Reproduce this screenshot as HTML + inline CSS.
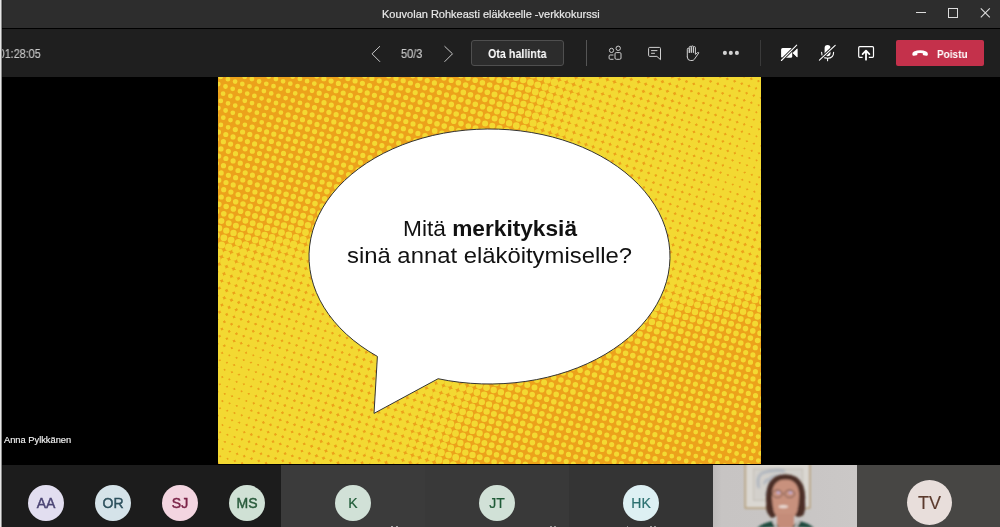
<!DOCTYPE html>
<html><head><meta charset="utf-8">
<style>
*{margin:0;padding:0;box-sizing:border-box}
html,body{width:1000px;height:527px;overflow:hidden;background:#000}
body{position:relative;font-family:"Liberation Sans",sans-serif}
.a{position:absolute}
.t{position:absolute;white-space:nowrap;line-height:1;will-change:transform}
.av span{will-change:transform}
.av{position:absolute;border-radius:50%;text-align:center;font-weight:normal;font-size:14px;-webkit-text-stroke:0.45px currentColor}
.av span{position:absolute;left:0;right:0;white-space:nowrap}
</style></head><body>
<!-- title bar -->
<div class="a" style="left:0;top:0;width:1000px;height:28px;background:#2d2d2d"></div>
<div class="a" style="left:0;top:28px;width:1000px;height:1px;background:#000"></div>
<div class="t" style="left:382px;top:9px;font-size:11px;color:#e8e8e8;-webkit-text-stroke:0.2px currentColor">Kouvolan Rohkeasti eläkkeelle -verkkokurssi</div>
<div class="a" style="left:916px;top:12px;width:10px;height:1px;background:#dcdcdc"></div>
<div class="a" style="left:948px;top:8px;width:10px;height:10px;border:1px solid #dcdcdc"></div>
<svg class="a" style="left:978px;top:6px" width="14" height="14" viewBox="978 6 14 14"><path d="M980.8 8.4L989.8 17.4M989.8 8.4L980.8 17.4" stroke="#dcdcdc" stroke-width="1.1"/></svg>
<!-- toolbar -->
<div class="a" style="left:0;top:29px;width:1000px;height:48px;background:#1f1f1f"></div>
<div class="t" style="right:959px;top:48px;font-size:12px;color:#c8c8c8;-webkit-text-stroke:0.15px currentColor;transform:scaleX(0.9);transform-origin:100% 0">01:28:05</div>
<svg class="a" style="left:0;top:29px" width="1000" height="48" viewBox="0 29 1000 48">
 <g fill="none" stroke="#c8c8c8" stroke-width="1">
  <path d="M380 46.2L372 53.8L380 61.8"/>
  <path d="M444.5 46.2L452.5 53.8L444.5 61.8"/>
 </g>
 <rect x="586" y="40" width="1" height="26" fill="#555"/>
 <rect x="760" y="40" width="1" height="26" fill="#3a3a3a"/>
 <!-- people -->
 <g fill="none" stroke="#cfcfcf" stroke-width="1">
  <circle cx="611.5" cy="50.4" r="2.1"/>
  <circle cx="618.2" cy="48.3" r="2.2"/>
  <path d="M613.5 55H610.2Q609.1 55 609.1 56.1V58.2Q609.1 59.3 610.2 59.3H613.5"/>
  <path d="M616.2 52.6H619.8Q621 52.6 621 53.8V58Q621 59.3 619.7 59.3H616.3Q615 59.3 615 58V53.8Q615 52.6 616.2 52.6Z"/>
 </g>
 <!-- chat -->
 <g fill="none" stroke="#cfcfcf" stroke-width="1">
  <path d="M649.7 47.4H659.4Q660.5 47.4 660.5 48.5V59.7L656.9 56.4H649.7Q648.6 56.4 648.6 55.3V48.5Q648.6 47.4 649.7 47.4Z" stroke-linejoin="round"/>
  <path d="M651.1 50.6H657.4M651.1 53.3H654.9"/>
 </g>
 <!-- hand -->
 <g fill="none" stroke="#cfcfcf" stroke-width="1" stroke-linejoin="round" stroke-linecap="round">
  <path d="M687.3 57V49.2Q687.3 48.2 688.3 48.2Q689.3 48.2 689.3 49.2V52.5M689.3 52.5V47.3Q689.3 46.3 690.3 46.3Q691.3 46.3 691.3 47.3V52.3M691.3 52.3V46.9Q691.3 45.9 692.4 45.9Q693.4 45.9 693.4 46.9V52.3M693.4 52.3V47.6Q693.4 46.6 694.4 46.6Q695.4 46.6 695.4 47.6V54.4L697.5 52.6Q698.3 52 698.9 52.8L694.2 59.5Q693.5 60.5 692 60.5H690.3Q687.3 60.5 687.3 57"/>
 </g>
 <!-- more -->
 <g fill="#d2d2d2"><circle cx="724.9" cy="52.9" r="2.05"/><circle cx="730.8" cy="52.9" r="2.05"/><circle cx="736.9" cy="52.9" r="2.05"/></g>
 <!-- camera off -->
 <rect x="781.1" y="47.9" width="11.1" height="9.9" rx="1.5" fill="#fff"/>
 <path d="M792.9 52.9L797.2 48.9V57Z" fill="#fff" stroke="#fff" stroke-width="0.8" stroke-linejoin="round"/>
 <path d="M781.4 60.5L796.7 45.2" stroke="#1f1f1f" stroke-width="3"/>
 <path d="M781.4 60.5L796.7 45.2" stroke="#fff" stroke-width="1.1" stroke-linecap="round"/>
 <!-- mic off -->
 <rect x="824.6" y="44.9" width="5.9" height="11.4" rx="2.95" fill="#fff"/>
 <path d="M821.6 52.3Q821.6 58.3 827.6 58.3Q833.6 58.3 833.6 52.3M827.6 58.3V60.7" fill="none" stroke="#fff" stroke-width="1.1" stroke-linecap="round"/>
 <path d="M819.4 60.2L835.2 45.4" stroke="#1f1f1f" stroke-width="3"/>
 <path d="M819.4 60.2L835.2 45.4" stroke="#fff" stroke-width="1.1" stroke-linecap="round"/>
 <!-- share -->
 <path d="M862.6 57.3H859.7Q858.7 57.3 858.7 56.3V47.7Q858.7 46.7 859.7 46.7H872.5Q873.5 46.7 873.5 47.7V56.3Q873.5 57.3 872.5 57.3H868.8" fill="none" stroke="#fff" stroke-width="1.2"/>
 <path d="M866 59.7V51M862.6 54.1L866 50.6L869.4 54.1" fill="none" stroke="#fff" stroke-width="1.8" stroke-linejoin="round" stroke-linecap="round"/>
</svg>
<div class="t" style="left:401px;top:48px;font-size:12px;color:#c8c8c8;-webkit-text-stroke:0.15px currentColor;transform:scaleX(0.91);transform-origin:0 0">50/3</div>
<div class="a" style="left:471px;top:40px;width:93px;height:26px;border:1px solid #4f4f4f;border-radius:3px;background:#2c2c2c"></div>
<div class="t" style="left:488px;top:48px;font-size:12px;font-weight:bold;color:#fff;transform:scaleX(0.895);transform-origin:0 0">Ota hallinta</div>
<div class="a" style="left:896px;top:40px;width:88px;height:26px;border-radius:2px;background:#c4314b"></div>
<svg class="a" style="left:910px;top:48px" width="20" height="10" viewBox="910 48 20 10"><path d="M912.3 54.6Q912 52.6 914 51.6Q917 50.2 920.1 50.2Q923.2 50.2 926.2 51.6Q928.2 52.6 927.9 54.6Q927.7 56 926.3 55.8L923.6 55.3Q922.8 55.1 922.8 54.3V53.3Q921.5 52.9 920.1 52.9Q918.7 52.9 917.4 53.3V54.3Q917.4 55.1 916.6 55.3L913.9 55.8Q912.5 56 912.3 54.6Z" fill="#fff"/></svg>
<div class="t" style="left:937px;top:49px;font-size:11px;font-weight:bold;color:#fff;transform:scaleX(0.908);transform-origin:0 0">Poistu</div>

<!-- slide -->
<svg class="a" style="left:218px;top:77px" width="543" height="387" viewBox="0 0 543 387">
 <rect width="543" height="387" fill="#eca21b"/>
 <g stroke-linecap="round" fill="none">
<g stroke="#f3d932">
<path stroke-width="4.8" d="M2.6 -0.1h0M0.3 7.1h0M-2.1 14.3h0M9.9 2.2h0M7.5 9.5h0M5.1 16.7h0M2.8 23.9h0M0.4 31.1h0M-1.9 38.3h0M17.1 4.6h0M14.7 11.8h0M12.4 19.0h0M10.0 26.3h0M7.6 33.5h0M5.3 40.7h0M2.9 47.9h0M26.7 -0.2h0M24.3 7.0h0M21.9 14.2h0M19.6 21.4h0M17.2 28.6h0M14.8 35.8h0M12.5 43.1h0M10.1 50.3h0M33.9 2.1h0M31.5 9.3h0M29.2 16.6h0M26.8 23.8h0M24.4 31.0h0M22.1 38.2h0M19.7 45.4h0M41.1 4.5h0M38.7 11.7h0M36.4 18.9h0M34.0 26.1h0M31.6 33.3h0M29.3 40.6h0M26.9 47.8h0M50.7 -0.4h0M48.3 6.8h0M45.9 14.1h0M43.6 21.3h0M41.2 28.5h0M38.9 35.7h0M36.5 42.9h0M57.9 2.0h0M55.5 9.2h0M53.2 16.4h0M50.8 23.6h0M48.4 30.9h0M46.1 38.1h0M43.7 45.3h0M65.1 4.3h0M62.7 11.6h0M60.4 18.8h0M58.0 26.0h0M55.7 33.2h0M53.3 40.4h0M74.7 -0.5h0M72.3 6.7h0M70.0 13.9h0M67.6 21.1h0M65.2 28.4h0M62.9 35.6h0M81.9 1.9h0M79.5 9.1h0M77.2 16.3h0M74.8 23.5h0M72.5 30.7h0M89.1 4.2h0M86.8 11.4h0M84.4 18.7h0M82.0 25.9h0M98.7 -0.6h0M96.3 6.6h0M94.0 13.8h0M91.6 21.0h0M446.6 376.9h0M444.2 384.1h0M458.5 364.8h0M456.2 372.0h0M453.8 379.2h0M451.4 386.5h0M470.5 352.7h0M468.1 360.0h0M465.7 367.2h0M463.4 374.4h0M461.0 381.6h0M458.7 388.8h0M480.0 347.9h0M477.7 355.1h0M475.3 362.3h0M473.0 369.5h0M470.6 376.7h0M468.2 384.0h0M487.3 350.2h0M484.9 357.5h0M482.5 364.7h0M480.2 371.9h0M477.8 379.1h0M475.5 386.3h0M496.8 345.4h0M494.5 352.6h0M492.1 359.8h0M489.8 367.0h0M487.4 374.3h0M485.0 381.5h0M482.7 388.7h0M506.4 340.5h0M504.1 347.7h0M501.7 355.0h0M499.3 362.2h0M497.0 369.4h0M494.6 376.6h0M492.3 383.8h0M513.6 342.9h0M511.3 350.1h0M508.9 357.3h0M506.6 364.5h0M504.2 371.8h0M501.8 379.0h0M499.5 386.2h0M523.2 338.0h0M520.9 345.3h0M518.5 352.5h0M516.1 359.7h0M513.8 366.9h0M511.4 374.1h0M509.0 381.3h0M506.7 388.6h0M530.4 340.4h0M528.1 347.6h0M525.7 354.8h0M523.4 362.0h0M521.0 369.3h0M518.6 376.5h0M516.3 383.7h0M537.7 342.8h0M535.3 350.0h0M532.9 357.2h0M530.6 364.4h0M528.2 371.6h0M525.8 378.8h0M523.5 386.1h0M544.9 345.1h0M542.5 352.3h0M540.1 359.6h0M537.8 366.8h0M535.4 374.0h0M533.1 381.2h0M530.7 388.4h0M545.0 369.1h0M542.6 376.4h0M540.3 383.6h0"/>
<path stroke-width="5.2" d="M0.5 55.1h0M-1.8 62.4h0M7.8 57.5h0M5.4 64.7h0M3.0 71.9h0M0.7 79.1h0M-1.7 86.4h0M17.3 52.6h0M15.0 59.9h0M12.6 67.1h0M10.3 74.3h0M7.9 81.5h0M5.5 88.7h0M3.2 95.9h0M0.8 103.2h0M-1.6 110.4h0M24.6 55.0h0M22.2 62.2h0M19.8 69.4h0M17.5 76.7h0M15.1 83.9h0M12.7 91.1h0M10.4 98.3h0M8.0 105.5h0M5.7 112.7h0M3.3 120.0h0M34.1 50.1h0M31.8 57.4h0M29.4 64.6h0M27.1 71.8h0M24.7 79.0h0M22.3 86.2h0M20.0 93.5h0M17.6 100.7h0M15.2 107.9h0M12.9 115.1h0M41.4 52.5h0M39.0 59.7h0M36.6 66.9h0M34.3 74.2h0M31.9 81.4h0M29.5 88.6h0M27.2 95.8h0M24.8 103.0h0M22.5 110.2h0M20.1 117.5h0M50.9 47.7h0M48.6 54.9h0M46.2 62.1h0M43.8 69.3h0M41.5 76.5h0M39.1 83.7h0M36.8 91.0h0M34.4 98.2h0M32.0 105.4h0M29.7 112.6h0M60.5 42.8h0M58.2 50.0h0M55.8 57.2h0M53.4 64.4h0M51.1 71.7h0M48.7 78.9h0M46.3 86.1h0M44.0 93.3h0M41.6 100.5h0M39.3 107.8h0M36.9 115.0h0M70.1 37.9h0M67.7 45.2h0M65.4 52.4h0M63.0 59.6h0M60.6 66.8h0M58.3 74.0h0M55.9 81.2h0M53.6 88.5h0M51.2 95.7h0M48.8 102.9h0M46.5 110.1h0M44.1 117.3h0M79.7 33.1h0M77.3 40.3h0M74.9 47.5h0M72.6 54.7h0M70.2 62.0h0M67.9 69.2h0M65.5 76.4h0M63.1 83.6h0M60.8 90.8h0M58.4 98.0h0M56.1 105.3h0M53.7 112.5h0M89.3 28.2h0M86.9 35.4h0M84.5 42.7h0M82.2 49.9h0M79.8 57.1h0M77.4 64.3h0M75.1 71.5h0M72.7 78.8h0M70.4 86.0h0M68.0 93.2h0M65.6 100.4h0M63.3 107.6h0M60.9 114.8h0M105.9 1.7h0M103.6 8.9h0M101.2 16.2h0M98.8 23.4h0M96.5 30.6h0M94.1 37.8h0M91.7 45.0h0M89.4 52.2h0M87.0 59.5h0M84.7 66.7h0M82.3 73.9h0M79.9 81.1h0M77.6 88.3h0M75.2 95.5h0M72.9 102.8h0M70.5 110.0h0M113.1 4.1h0M110.8 11.3h0M108.4 18.5h0M106.0 25.7h0M103.7 33.0h0M101.3 40.2h0M99.0 47.4h0M96.6 54.6h0M94.2 61.8h0M91.9 69.0h0M89.5 76.3h0M87.2 83.5h0M84.8 90.7h0M82.4 97.9h0M80.1 105.1h0M77.7 112.3h0M122.7 -0.8h0M120.4 6.4h0M118.0 13.7h0M115.6 20.9h0M113.3 28.1h0M110.9 35.3h0M108.5 42.5h0M106.2 49.7h0M103.8 57.0h0M101.5 64.2h0M99.1 71.4h0M96.7 78.6h0M94.4 85.8h0M92.0 93.1h0M89.6 100.3h0M87.3 107.5h0M129.9 1.6h0M127.6 8.8h0M125.2 16.0h0M122.8 23.2h0M120.5 30.5h0M118.1 37.7h0M115.8 44.9h0M113.4 52.1h0M111.0 59.3h0M108.7 66.5h0M106.3 73.8h0M104.0 81.0h0M101.6 88.2h0M99.2 95.4h0M96.9 102.6h0M94.5 109.9h0M137.1 4.0h0M134.8 11.2h0M132.4 18.4h0M130.1 25.6h0M127.7 32.8h0M125.3 40.0h0M123.0 47.3h0M120.6 54.5h0M118.3 61.7h0M115.9 68.9h0M113.5 76.1h0M111.2 83.3h0M108.8 90.6h0M106.4 97.8h0M104.1 105.0h0M146.7 -0.9h0M144.4 6.3h0M142.0 13.5h0M139.6 20.7h0M137.3 28.0h0M134.9 35.2h0M132.6 42.4h0M130.2 49.6h0M127.8 56.8h0M125.5 64.1h0M123.1 71.3h0M120.7 78.5h0M118.4 85.7h0M116.0 92.9h0M113.7 100.1h0M153.9 1.5h0M151.6 8.7h0M149.2 15.9h0M146.9 23.1h0M144.5 30.3h0M142.1 37.5h0M139.8 44.8h0M137.4 52.0h0M135.0 59.2h0M132.7 66.4h0M130.3 73.6h0M128.0 80.8h0M125.6 88.1h0M123.2 95.3h0M120.9 102.5h0M161.2 3.8h0M158.8 11.0h0M156.4 18.3h0M154.1 25.5h0M151.7 32.7h0M149.4 39.9h0M147.0 47.1h0M144.6 54.3h0M142.3 61.6h0M139.9 68.8h0M137.5 76.0h0M135.2 83.2h0M132.8 90.4h0M130.5 97.6h0M170.7 -1.0h0M168.4 6.2h0M166.0 13.4h0M163.7 20.6h0M161.3 27.8h0M158.9 35.1h0M156.6 42.3h0M154.2 49.5h0M151.8 56.7h0M149.5 63.9h0M147.1 71.1h0M144.8 78.4h0M142.4 85.6h0M140.0 92.8h0M178.0 1.3h0M175.6 8.5h0M173.2 15.8h0M170.9 23.0h0M168.5 30.2h0M166.1 37.4h0M163.8 44.6h0M161.4 51.8h0M159.1 59.1h0M156.7 66.3h0M154.3 73.5h0M152.0 80.7h0M149.6 87.9h0M185.2 3.7h0M182.8 10.9h0M180.5 18.1h0M178.1 25.3h0M175.7 32.6h0M173.4 39.8h0M171.0 47.0h0M168.6 54.2h0M166.3 61.4h0M163.9 68.6h0M161.6 75.9h0M159.2 83.1h0M194.8 -1.2h0M192.4 6.0h0M190.0 13.3h0M187.7 20.5h0M185.3 27.7h0M182.9 34.9h0M180.6 42.1h0M178.2 49.4h0M175.9 56.6h0M173.5 63.8h0M171.1 71.0h0M168.8 78.2h0M202.0 1.2h0M199.6 8.4h0M197.2 15.6h0M194.9 22.8h0M192.5 30.1h0M190.2 37.3h0M187.8 44.5h0M185.4 51.7h0M183.1 58.9h0M180.7 66.2h0M178.4 73.4h0M209.2 3.6h0M206.8 10.8h0M204.5 18.0h0M202.1 25.2h0M199.7 32.4h0M197.4 39.6h0M195.0 46.9h0M192.7 54.1h0M190.3 61.3h0M187.9 68.5h0M218.8 -1.3h0M216.4 5.9h0M214.0 13.1h0M211.7 20.4h0M209.3 27.6h0M207.0 34.8h0M204.6 42.0h0M202.2 49.2h0M199.9 56.4h0M197.5 63.7h0M226.0 1.1h0M223.6 8.3h0M221.3 15.5h0M218.9 22.7h0M216.5 29.9h0M214.2 37.1h0M211.8 44.4h0M209.5 51.6h0M233.2 3.4h0M230.8 10.6h0M228.5 17.9h0M226.1 25.1h0M223.8 32.3h0M221.4 39.5h0M328.7 346.3h0M326.4 353.5h0M324.0 360.7h0M321.7 368.0h0M319.3 375.2h0M316.9 382.4h0M314.6 389.6h0M340.7 334.2h0M338.3 341.5h0M336.0 348.7h0M333.6 355.9h0M331.2 363.1h0M328.9 370.3h0M326.5 377.5h0M324.2 384.8h0M352.6 322.2h0M350.3 329.4h0M347.9 336.6h0M345.5 343.8h0M343.2 351.0h0M340.8 358.2h0M338.5 365.5h0M336.1 372.7h0M333.7 379.9h0M331.4 387.1h0M362.2 317.3h0M359.8 324.5h0M357.5 331.7h0M355.1 339.0h0M352.8 346.2h0M350.4 353.4h0M348.0 360.6h0M345.7 367.8h0M343.3 375.0h0M341.0 382.3h0M338.6 389.5h0M371.8 312.5h0M369.4 319.7h0M367.1 326.9h0M364.7 334.1h0M362.3 341.3h0M360.0 348.5h0M357.6 355.8h0M355.3 363.0h0M352.9 370.2h0M350.5 377.4h0M348.2 384.6h0M381.4 307.6h0M379.0 314.8h0M376.6 322.0h0M374.3 329.2h0M371.9 336.5h0M369.6 343.7h0M367.2 350.9h0M364.8 358.1h0M362.5 365.3h0M360.1 372.6h0M357.7 379.8h0M355.4 387.0h0M390.9 302.7h0M388.6 310.0h0M386.2 317.2h0M383.9 324.4h0M381.5 331.6h0M379.1 338.8h0M376.8 346.0h0M374.4 353.3h0M372.0 360.5h0M369.7 367.7h0M367.3 374.9h0M365.0 382.1h0M362.6 389.3h0M400.5 297.9h0M398.2 305.1h0M395.8 312.3h0M393.4 319.5h0M391.1 326.8h0M388.7 334.0h0M386.4 341.2h0M384.0 348.4h0M381.6 355.6h0M379.3 362.8h0M376.9 370.1h0M374.5 377.3h0M372.2 384.5h0M410.1 293.0h0M407.7 300.2h0M405.4 307.5h0M403.0 314.7h0M400.7 321.9h0M398.3 329.1h0M395.9 336.3h0M393.6 343.6h0M391.2 350.8h0M388.8 358.0h0M386.5 365.2h0M384.1 372.4h0M381.8 379.6h0M379.4 386.9h0M419.7 288.2h0M417.3 295.4h0M415.0 302.6h0M412.6 309.8h0M410.2 317.0h0M407.9 324.3h0M405.5 331.5h0M403.1 338.7h0M400.8 345.9h0M398.4 353.1h0M396.1 360.3h0M393.7 367.6h0M391.3 374.8h0M389.0 382.0h0M386.6 389.2h0M426.9 290.5h0M424.5 297.8h0M422.2 305.0h0M419.8 312.2h0M417.5 319.4h0M415.1 326.6h0M412.7 333.8h0M410.4 341.1h0M408.0 348.3h0M405.6 355.5h0M403.3 362.7h0M400.9 369.9h0M398.6 377.1h0M396.2 384.4h0M436.5 285.7h0M434.1 292.9h0M431.8 300.1h0M429.4 307.3h0M427.0 314.5h0M424.7 321.8h0M422.3 329.0h0M419.9 336.2h0M417.6 343.4h0M415.2 350.6h0M412.9 357.9h0M410.5 365.1h0M408.1 372.3h0M405.8 379.5h0M403.4 386.7h0M446.1 280.8h0M443.7 288.0h0M441.3 295.3h0M439.0 302.5h0M436.6 309.7h0M434.2 316.9h0M431.9 324.1h0M429.5 331.3h0M427.2 338.6h0M424.8 345.8h0M422.4 353.0h0M420.1 360.2h0M417.7 367.4h0M415.4 374.7h0M413.0 381.9h0M410.6 389.1h0M453.3 283.2h0M450.9 290.4h0M448.6 297.6h0M446.2 304.8h0M443.8 312.1h0M441.5 319.3h0M439.1 326.5h0M436.7 333.7h0M434.4 340.9h0M432.0 348.1h0M429.7 355.4h0M427.3 362.6h0M424.9 369.8h0M422.6 377.0h0M420.2 384.2h0M462.9 278.3h0M460.5 285.5h0M458.1 292.8h0M455.8 300.0h0M453.4 307.2h0M451.0 314.4h0M448.7 321.6h0M446.3 328.9h0M444.0 336.1h0M441.6 343.3h0M439.2 350.5h0M436.9 357.7h0M434.5 364.9h0M432.2 372.2h0M429.8 379.4h0M427.4 386.6h0M470.1 280.7h0M467.7 287.9h0M465.3 295.1h0M463.0 302.3h0M460.6 309.6h0M458.3 316.8h0M455.9 324.0h0M453.5 331.2h0M451.2 338.4h0M448.8 345.6h0M446.5 352.9h0M444.1 360.1h0M441.7 367.3h0M439.4 374.5h0M437.0 381.7h0M434.6 389.0h0M479.7 275.8h0M477.3 283.1h0M474.9 290.3h0M472.6 297.5h0M470.2 304.7h0M467.8 311.9h0M465.5 319.1h0M463.1 326.4h0M460.8 333.6h0M458.4 340.8h0M456.0 348.0h0M453.7 355.2h0M451.3 362.4h0M448.9 369.7h0M486.9 278.2h0M484.5 285.4h0M482.1 292.6h0M479.8 299.9h0M477.4 307.1h0M475.1 314.3h0M472.7 321.5h0M470.3 328.7h0M468.0 335.9h0M465.6 343.2h0M463.2 350.4h0M460.9 357.6h0M496.4 273.3h0M494.1 280.6h0M491.7 287.8h0M489.4 295.0h0M487.0 302.2h0M484.6 309.4h0M482.3 316.6h0M479.9 323.9h0M477.6 331.1h0M475.2 338.3h0M472.8 345.5h0M503.7 275.7h0M501.3 282.9h0M498.9 290.1h0M496.6 297.4h0M494.2 304.6h0M491.9 311.8h0M489.5 319.0h0M487.1 326.2h0M484.8 333.4h0M482.4 340.7h0M513.2 270.8h0M510.9 278.1h0M508.5 285.3h0M506.2 292.5h0M503.8 299.7h0M501.4 306.9h0M499.1 314.2h0M496.7 321.4h0M494.3 328.6h0M492.0 335.8h0M489.6 343.0h0M520.5 273.2h0M518.1 280.4h0M515.7 287.6h0M513.4 294.9h0M511.0 302.1h0M508.7 309.3h0M506.3 316.5h0M503.9 323.7h0M501.6 330.9h0M499.2 338.2h0M527.7 275.6h0M525.3 282.8h0M523.0 290.0h0M520.6 297.2h0M518.2 304.4h0M515.9 311.7h0M513.5 318.9h0M511.1 326.1h0M508.8 333.3h0M537.3 270.7h0M534.9 277.9h0M532.5 285.2h0M530.2 292.4h0M527.8 299.6h0M525.4 306.8h0M523.1 314.0h0M520.7 321.2h0M518.4 328.5h0M516.0 335.7h0M544.5 273.1h0M542.1 280.3h0M539.8 287.5h0M537.4 294.7h0M535.0 301.9h0M532.7 309.2h0M530.3 316.4h0M527.9 323.6h0M525.6 330.8h0M544.6 297.1h0M542.2 304.3h0M539.9 311.5h0M537.5 318.7h0M535.2 326.0h0M532.8 333.2h0M544.7 321.1h0M542.4 328.3h0M540.0 335.5h0"/>
<path stroke-width="5.6" d="M0.9 127.2h0M-1.4 134.4h0M10.5 122.3h0M8.2 129.5h0M5.8 136.8h0M17.7 124.7h0M15.4 131.9h0M13.0 139.1h0M27.3 119.8h0M25.0 127.0h0M22.6 134.3h0M34.5 122.2h0M32.2 129.4h0M29.8 136.6h0M41.8 124.5h0M39.4 131.8h0M51.3 119.7h0M49.0 126.9h0M46.6 134.1h0M58.5 122.1h0M56.2 129.3h0M53.8 136.5h0M68.1 117.2h0M65.8 124.4h0M63.4 131.6h0M75.3 119.6h0M73.0 126.8h0M70.6 134.0h0M84.9 114.7h0M82.6 121.9h0M80.2 129.1h0M92.1 117.1h0M89.8 124.3h0M87.4 131.5h0M101.7 112.2h0M99.4 119.4h0M97.0 126.6h0M111.3 107.4h0M108.9 114.6h0M106.6 121.8h0M104.2 129.0h0M118.5 109.7h0M116.2 116.9h0M128.1 104.9h0M207.1 58.8h0M219.0 46.7h0M216.7 53.9h0M214.3 61.2h0M242.8 -1.4h0M240.4 5.8h0M238.1 13.0h0M235.7 20.2h0M233.3 27.4h0M231.0 34.7h0M228.6 41.9h0M226.2 49.1h0M223.9 56.3h0M250.0 0.9h0M247.6 8.1h0M245.3 15.4h0M242.9 22.6h0M240.6 29.8h0M238.2 37.0h0M235.8 44.2h0M233.5 51.5h0M231.1 58.7h0M257.2 3.3h0M254.9 10.5h0M252.5 17.7h0M250.1 24.9h0M247.8 32.2h0M245.4 39.4h0M243.0 46.6h0M240.7 53.8h0M266.8 -1.6h0M264.4 5.7h0M262.1 12.9h0M259.7 20.1h0M257.3 27.3h0M255.0 34.5h0M252.6 41.7h0M250.3 49.0h0M247.9 56.2h0M274.0 0.8h0M271.7 8.0h0M269.3 15.2h0M266.9 22.5h0M264.6 29.7h0M262.2 36.9h0M259.8 44.1h0M290.3 341.7h0M287.9 348.9h0M285.6 356.2h0M283.2 363.4h0M280.8 370.6h0M278.5 377.8h0M276.1 385.0h0M302.2 329.6h0M299.9 336.9h0M297.5 344.1h0M295.2 351.3h0M292.8 358.5h0M290.4 365.7h0M288.1 372.9h0M285.7 380.2h0M283.3 387.4h0M314.2 317.6h0M311.8 324.8h0M309.5 332.0h0M307.1 339.2h0M304.7 346.4h0M302.4 353.7h0M300.0 360.9h0M297.6 368.1h0M295.3 375.3h0M292.9 382.5h0M290.6 389.7h0M323.8 312.7h0M321.4 319.9h0M319.0 327.2h0M316.7 334.4h0M314.3 341.6h0M311.9 348.8h0M309.6 356.0h0M307.2 363.2h0M304.9 370.5h0M302.5 377.7h0M300.1 384.9h0M335.7 300.6h0M333.3 307.9h0M331.0 315.1h0M328.6 322.3h0M326.3 329.5h0M323.9 336.7h0M321.5 343.9h0M319.2 351.2h0M316.8 358.4h0M314.4 365.6h0M312.1 372.8h0M309.7 380.0h0M307.4 387.3h0M345.3 295.8h0M342.9 303.0h0M340.6 310.2h0M338.2 317.4h0M335.8 324.7h0M333.5 331.9h0M331.1 339.1h0M354.9 290.9h0M352.5 298.1h0M350.1 305.4h0M347.8 312.6h0M345.4 319.8h0M343.0 327.0h0M364.4 286.1h0M362.1 293.3h0M359.7 300.5h0M357.4 307.7h0M355.0 314.9h0M374.0 281.2h0M371.7 288.4h0M369.3 295.7h0M366.9 302.9h0M364.6 310.1h0M383.6 276.4h0M381.2 283.6h0M378.9 290.8h0M376.5 298.0h0M374.1 305.2h0M390.8 278.7h0M388.5 285.9h0M386.1 293.2h0M383.7 300.4h0M400.4 273.9h0M398.0 281.1h0M395.7 288.3h0M393.3 295.5h0M410.0 269.0h0M407.6 276.2h0M405.2 283.5h0M402.9 290.7h0M417.2 271.4h0M414.8 278.6h0M412.5 285.8h0M426.8 266.5h0M424.4 273.7h0M422.0 281.0h0M436.3 261.7h0M434.0 268.9h0M431.6 276.1h0M429.3 283.3h0M443.6 264.0h0M441.2 271.2h0M438.8 278.5h0M453.1 259.2h0M450.8 266.4h0M448.4 273.6h0M460.4 261.5h0M458.0 268.8h0M455.6 276.0h0M469.9 256.7h0M467.6 263.9h0M465.2 271.1h0M477.2 259.0h0M474.8 266.3h0M472.4 273.5h0M486.7 254.2h0M484.4 261.4h0M482.0 268.6h0M494.0 256.5h0M491.6 263.8h0M489.2 271.0h0M503.5 251.7h0M501.2 258.9h0M498.8 266.1h0M510.7 254.1h0M508.4 261.3h0M506.0 268.5h0M518.0 256.4h0M515.6 263.6h0M527.5 251.6h0M525.2 258.8h0M522.8 266.0h0M534.8 253.9h0M532.4 261.1h0M530.0 268.4h0M542.0 256.3h0M539.6 263.5h0"/>
<path stroke-width="6.0" d="M3.4 144.0h0M10.7 146.3h0M20.2 141.5h0M17.9 148.7h0M27.4 143.8h0M37.0 139.0h0M34.7 146.2h0M44.2 141.3h0M51.5 143.7h0M61.0 138.9h0M58.7 146.1h0M68.3 141.2h0M77.8 136.4h0M75.5 143.6h0M85.1 138.7h0M94.6 133.9h0M92.3 141.1h0M101.9 136.2h0M257.5 51.3h0M281.2 3.2h0M278.9 10.4h0M276.5 17.6h0M274.1 24.8h0M271.8 32.0h0M269.4 39.2h0M267.1 46.5h0M264.7 53.7h0M290.8 -1.7h0M288.4 5.5h0M286.1 12.7h0M283.7 20.0h0M281.4 27.2h0M279.0 34.4h0M276.6 41.6h0M274.3 48.8h0M271.9 56.0h0M275.9 337.0h0M273.5 344.2h0M271.1 351.4h0M268.8 358.6h0M266.4 365.9h0M264.1 373.1h0M261.7 380.3h0M259.3 387.5h0M287.8 324.9h0M285.4 332.1h0M283.1 339.4h0M280.7 346.6h0M278.4 353.8h0M276.0 361.0h0M273.6 368.2h0M271.3 375.4h0M268.9 382.7h0M266.5 389.9h0M299.7 312.8h0M297.4 320.1h0M295.0 327.3h0M292.7 334.5h0M311.7 300.8h0M309.3 308.0h0M307.0 315.2h0M304.6 322.4h0M318.9 303.1h0M316.5 310.4h0M328.5 298.3h0M326.1 305.5h0M393.2 271.5h0M402.8 266.7h0M412.3 261.8h0M421.9 256.9h0M419.5 264.2h0M431.5 252.1h0M429.1 259.3h0M438.7 254.4h0M448.3 249.6h0M445.9 256.8h0M455.5 252.0h0M465.1 247.1h0M462.7 254.3h0M472.3 249.5h0M481.9 244.6h0M479.5 251.8h0M489.1 247.0h0M498.7 242.1h0M496.3 249.3h0M505.9 244.5h0M513.1 246.8h0M522.7 242.0h0M520.3 249.2h0M529.9 244.3h0M537.1 246.7h0M544.3 249.1h0"/>
<path stroke-width="6.4" d="M1.1 151.2h0M-1.3 158.4h0M8.3 153.6h0M15.5 155.9h0M25.1 151.1h0M22.7 158.3h0M32.3 153.4h0M41.9 148.6h0M39.5 155.8h0M49.1 150.9h0M56.3 153.3h0M65.9 148.4h0M73.1 150.8h0M82.7 145.9h0M80.3 153.2h0M89.9 148.3h0M99.5 143.4h0M97.1 150.7h0M298.0 0.7h0M295.7 7.9h0M293.3 15.1h0M290.9 22.3h0M288.6 29.5h0M286.2 36.8h0M283.9 44.0h0M281.5 51.2h0M305.2 3.0h0M302.9 10.2h0M300.5 17.5h0M298.2 24.7h0M295.8 31.9h0M293.4 39.1h0M291.1 46.3h0M288.7 53.5h0M310.1 12.6h0M307.7 19.8h0M305.4 27.0h0M303.0 34.3h0M300.7 41.5h0M247.1 351.6h0M244.8 358.8h0M242.4 366.0h0M240.0 373.2h0M263.8 325.1h0M261.4 332.3h0M259.1 339.5h0M256.7 346.7h0M254.3 353.9h0M252.0 361.1h0M249.6 368.4h0M247.3 375.6h0M244.9 382.8h0M242.5 390.0h0M275.7 313.0h0M273.4 320.2h0M271.0 327.4h0M268.6 334.6h0M266.3 341.8h0M263.9 349.1h0M261.6 356.3h0M259.2 363.5h0M256.8 370.7h0M254.5 377.9h0M252.1 385.2h0M285.3 308.1h0M282.9 315.3h0M280.6 322.6h0M278.2 329.8h0M294.9 303.3h0M292.5 310.5h0M290.2 317.7h0M302.1 305.6h0M414.7 254.6h0M424.3 249.7h0M433.9 244.9h0M443.4 240.0h0M441.1 247.2h0M450.6 242.4h0M460.2 237.5h0M457.9 244.7h0M467.4 239.9h0M477.0 235.0h0M474.7 242.2h0M484.2 237.4h0M491.5 239.7h0M501.0 234.9h0M508.3 237.3h0M517.8 232.4h0M515.5 239.6h0M525.1 234.8h0M532.3 237.1h0M541.8 232.3h0M539.5 239.5h0"/>
<path stroke-width="6.8" d="M5.9 160.8h0M13.1 163.1h0M29.9 160.6h0M37.2 163.0h0M46.7 158.1h0M54.0 160.5h0M63.5 155.6h0M70.8 158.0h0M78.0 160.4h0M87.5 155.5h0M94.8 157.9h0M314.8 -1.8h0M312.5 5.4h0M298.3 48.7h0M295.9 55.9h0M322.0 0.5h0M319.7 7.8h0M317.3 15.0h0M315.0 22.2h0M312.6 29.4h0M310.2 36.6h0M307.9 43.8h0M305.5 51.1h0M303.1 58.3h0M244.6 334.8h0M242.3 342.0h0M239.9 349.2h0M237.5 356.4h0M235.2 363.6h0M232.8 370.9h0M230.5 378.1h0M228.1 385.3h0M258.9 315.5h0M256.6 322.7h0M254.2 329.9h0M251.8 337.1h0M249.5 344.3h0M237.7 380.4h0M235.3 387.6h0M270.9 303.4h0M268.5 310.6h0M266.2 317.8h0M278.1 305.8h0M429.0 235.3h0M426.6 242.5h0M436.2 237.7h0M445.8 232.8h0M453.0 235.2h0M462.6 230.3h0M469.8 232.7h0M479.4 227.8h0M486.6 230.2h0M493.8 232.5h0M503.4 227.7h0M510.6 230.0h0M520.2 225.2h0M527.4 227.5h0M534.6 229.9h0M544.2 225.1h0"/>
<path stroke-width="7.2" d="M3.6 168.0h0M20.4 165.5h0M27.6 167.9h0M44.4 165.4h0M51.6 167.7h0M61.2 162.9h0M68.4 165.2h0M85.2 162.7h0M329.3 2.9h0M326.9 10.1h0M324.5 17.3h0M322.2 24.5h0M319.8 31.8h0M317.5 39.0h0M315.1 46.2h0M312.7 53.4h0M331.8 19.7h0M329.4 26.9h0M327.0 34.1h0M237.4 332.4h0M235.1 339.6h0M232.7 346.8h0M230.3 354.1h0M228.0 361.3h0M225.6 368.5h0M223.2 375.7h0M220.9 382.9h0M218.5 390.1h0M251.7 313.1h0M249.4 320.3h0M247.0 327.5h0M261.3 308.3h0M438.6 230.4h0M455.4 227.9h0M472.2 225.4h0M489.0 223.0h0M496.2 225.3h0M513.0 222.8h0M529.8 220.3h0M537.0 222.7h0"/>
<path stroke-width="7.6" d="M1.2 175.2h0M-1.2 182.4h0M10.8 170.3h0M8.4 177.6h0M18.0 172.7h0M15.6 179.9h0M25.2 175.1h0M22.9 182.3h0M34.8 170.2h0M32.4 177.4h0M42.0 172.6h0M39.7 179.8h0M49.2 174.9h0M46.9 182.2h0M58.8 170.1h0M56.5 177.3h0M66.0 172.4h0M63.7 179.7h0M75.6 167.6h0M73.2 174.8h0M82.8 170.0h0M80.5 177.2h0M92.4 165.1h0M90.0 172.3h0M201.5 344.6h0M199.1 351.8h0M196.7 359.0h0M194.4 366.3h0M192.0 373.5h0M218.1 318.1h0M215.8 325.3h0M213.4 332.5h0M211.0 339.8h0M208.7 347.0h0M206.3 354.2h0M204.0 361.4h0M201.6 368.6h0M199.2 375.8h0M196.9 383.1h0M194.5 390.3h0M230.1 306.0h0M227.7 313.2h0M225.3 320.5h0M223.0 327.7h0M220.6 334.9h0M218.3 342.1h0M215.9 349.3h0M213.5 356.5h0M211.2 363.8h0M208.8 371.0h0M206.4 378.2h0M204.1 385.4h0M338.8 -2.0h0M336.5 5.3h0M334.1 12.5h0M324.7 41.3h0M322.3 48.6h0M319.9 55.8h0M239.6 301.2h0M237.3 308.4h0M234.9 315.6h0M232.6 322.8h0M230.2 330.0h0M227.8 337.3h0M225.5 344.5h0M223.1 351.7h0M220.7 358.9h0M218.4 366.1h0M216.0 373.3h0M213.7 380.6h0M211.3 387.8h0M346.1 0.4h0M343.7 7.6h0M341.3 14.8h0M339.0 22.1h0M336.6 29.3h0M334.2 36.5h0M331.9 43.7h0M329.5 50.9h0M327.2 58.1h0M246.9 303.5h0M244.5 310.7h0M242.1 318.0h0M239.8 325.2h0M353.3 2.8h0M350.9 10.0h0M348.5 17.2h0M346.2 24.4h0M343.8 31.6h0M341.5 38.9h0M339.1 46.1h0M336.7 53.3h0M334.4 60.5h0M254.1 305.9h0M360.5 5.1h0M358.1 12.3h0M355.8 19.6h0M353.4 26.8h0M351.0 34.0h0M348.7 41.2h0M346.3 48.4h0M344.0 55.6h0M443.3 216.0h0M440.9 223.2h0M450.5 218.4h0M448.2 225.6h0M460.1 213.5h0M457.7 220.7h0M467.3 215.9h0M465.0 223.1h0M476.9 211.0h0M474.5 218.2h0M484.1 213.4h0M481.7 220.6h0M493.7 208.5h0M491.3 215.7h0M500.9 210.9h0M498.5 218.1h0M508.1 213.2h0M505.8 220.5h0M517.7 208.4h0M515.3 215.6h0M524.9 210.7h0M522.6 218.0h0M532.1 213.1h0M541.7 208.3h0M539.4 215.5h0M546.6 217.8h0"/>
<path stroke-width="8.0" d="M-3.5 189.6h0M6.1 184.8h0M3.7 192.0h0M1.3 199.2h0M13.3 187.1h0M10.9 194.4h0M8.6 201.6h0M20.5 189.5h0M18.1 196.7h0M15.8 203.9h0M30.1 184.7h0M27.7 191.9h0M25.4 199.1h0M37.3 187.0h0M34.9 194.2h0M32.6 201.4h0M44.5 189.4h0M42.1 196.6h0M54.1 184.5h0M51.7 191.7h0M49.4 199.0h0M61.3 186.9h0M58.9 194.1h0M56.6 201.3h0M70.9 182.0h0M68.5 189.2h0M66.2 196.5h0M78.1 184.4h0M75.7 191.6h0M73.4 198.8h0M87.7 179.5h0M85.3 186.7h0M83.0 194.0h0M94.9 181.9h0M92.5 189.1h0M90.2 196.3h0M165.4 332.8h0M163.0 340.0h0M160.6 347.2h0M158.3 354.5h0M155.9 361.7h0M153.6 368.9h0M151.2 376.1h0M179.7 313.5h0M177.3 320.7h0M175.0 327.9h0M172.6 335.2h0M170.2 342.4h0M167.9 349.6h0M165.5 356.8h0M163.1 364.0h0M160.8 371.2h0M158.4 378.5h0M156.1 385.7h0M191.6 301.4h0M189.3 308.7h0M186.9 315.9h0M184.5 323.1h0M182.2 330.3h0M179.8 337.5h0M177.4 344.7h0M175.1 352.0h0M172.7 359.2h0M170.4 366.4h0M168.0 373.6h0M165.6 380.8h0M163.3 388.0h0M201.2 296.6h0M198.8 303.8h0M196.5 311.0h0M194.1 318.2h0M191.7 325.4h0M189.4 332.7h0M187.0 339.9h0M184.7 347.1h0M182.3 354.3h0M179.9 361.5h0M177.6 368.8h0M175.2 376.0h0M172.9 383.2h0M170.5 390.4h0M208.4 298.9h0M206.0 306.2h0M203.7 313.4h0M201.3 320.6h0M199.0 327.8h0M196.6 335.0h0M194.2 342.2h0M191.9 349.5h0M189.5 356.7h0M187.2 363.9h0M184.8 371.1h0M182.4 378.3h0M180.1 385.5h0M215.6 301.3h0M213.3 308.5h0M210.9 315.7h0M208.5 323.0h0M206.2 330.2h0M203.8 337.4h0M189.6 380.7h0M187.3 387.9h0M222.8 303.7h0M220.5 310.9h0M362.9 -2.1h0M341.6 62.9h0M370.1 0.3h0M367.7 7.5h0M365.3 14.7h0M363.0 21.9h0M360.6 29.1h0M358.3 36.4h0M355.9 43.6h0M353.5 50.8h0M351.2 58.0h0M348.8 65.2h0M377.3 2.6h0M374.9 9.8h0M372.6 17.1h0M370.2 24.3h0M367.8 31.5h0M365.5 38.7h0M363.1 45.9h0M360.8 53.2h0M358.4 60.4h0M356.0 67.6h0M386.9 -2.2h0M384.5 5.0h0M382.1 12.2h0M379.8 19.4h0M377.4 26.6h0M375.1 33.9h0M372.7 41.1h0M370.3 48.3h0M368.0 55.5h0M365.6 62.7h0M363.2 70.0h0M394.1 0.1h0M391.7 7.4h0M389.4 14.6h0M387.0 21.8h0M384.6 29.0h0M382.3 36.2h0M379.9 43.4h0M377.6 50.7h0M375.2 57.9h0M372.8 65.1h0M370.5 72.3h0M401.3 2.5h0M398.9 9.7h0M396.6 16.9h0M394.2 24.2h0M391.9 31.4h0M389.5 38.6h0M387.1 45.8h0M384.8 53.0h0M382.4 60.2h0M450.4 194.3h0M448.0 201.6h0M445.7 208.8h0M457.6 196.7h0M455.2 203.9h0M452.9 211.1h0M467.2 191.9h0M464.8 199.1h0M462.5 206.3h0M474.4 194.2h0M472.0 201.4h0M469.7 208.7h0M484.0 189.4h0M481.6 196.6h0M479.3 203.8h0M491.2 191.7h0M488.8 198.9h0M486.5 206.2h0M498.4 194.1h0M496.1 201.3h0M508.0 189.2h0M505.6 196.4h0M503.3 203.7h0M515.2 191.6h0M512.8 198.8h0M510.5 206.0h0M524.8 186.7h0M522.4 194.0h0M520.1 201.2h0M532.0 189.1h0M529.6 196.3h0M527.3 203.5h0M539.2 191.5h0M536.9 198.7h0M534.5 205.9h0M546.4 193.8h0M544.1 201.0h0"/>
<path stroke-width="8.4" d="M-1.0 206.4h0M-3.4 213.7h0M6.2 208.8h0M3.8 216.0h0M1.5 223.2h0M-0.9 230.4h0M13.4 211.2h0M11.0 218.4h0M8.7 225.6h0M6.3 232.8h0M23.0 206.3h0M20.6 213.5h0M18.3 220.7h0M15.9 228.0h0M13.5 235.2h0M30.2 208.7h0M27.8 215.9h0M25.5 223.1h0M23.1 230.3h0M39.8 203.8h0M37.4 211.0h0M35.1 218.2h0M32.7 225.5h0M30.3 232.7h0M47.0 206.2h0M44.6 213.4h0M42.3 220.6h0M39.9 227.8h0M37.6 235.0h0M54.2 208.5h0M51.9 215.7h0M49.5 223.0h0M47.1 230.2h0M63.8 203.7h0M61.4 210.9h0M59.1 218.1h0M56.7 225.3h0M54.4 232.5h0M71.0 206.0h0M68.7 213.3h0M66.3 220.5h0M63.9 227.7h0M80.6 201.2h0M78.2 208.4h0M75.9 215.6h0M73.5 222.8h0M71.1 230.1h0M87.8 203.5h0M85.5 210.8h0M83.1 218.0h0M80.7 225.2h0M78.4 232.4h0M97.4 198.7h0M95.0 205.9h0M92.7 213.1h0M90.3 220.3h0M87.9 227.6h0M99.9 215.5h0M97.5 222.7h0M95.2 229.9h0M104.7 225.1h0M100.5 335.6h0M98.2 342.8h0M95.8 350.0h0M93.5 357.2h0M117.2 309.0h0M114.8 316.3h0M112.5 323.5h0M110.1 330.7h0M107.8 337.9h0M105.4 345.1h0M103.0 352.4h0M100.7 359.6h0M98.3 366.8h0M96.0 374.0h0M93.6 381.2h0M91.2 388.4h0M131.5 289.8h0M129.2 297.0h0M126.8 304.2h0M124.4 311.4h0M122.1 318.6h0M119.7 325.8h0M117.3 333.1h0M115.0 340.3h0M112.6 347.5h0M110.3 354.7h0M107.9 361.9h0M105.5 369.1h0M103.2 376.4h0M100.8 383.6h0M98.4 390.8h0M143.5 277.7h0M141.1 284.9h0M138.7 292.1h0M136.4 299.3h0M134.0 306.6h0M131.6 313.8h0M129.3 321.0h0M126.9 328.2h0M124.6 335.4h0M122.2 342.6h0M119.8 349.9h0M117.5 357.1h0M115.1 364.3h0M112.8 371.5h0M110.4 378.7h0M108.0 385.9h0M153.0 272.8h0M150.7 280.0h0M148.3 287.3h0M145.9 294.5h0M143.6 301.7h0M141.2 308.9h0M138.9 316.1h0M136.5 323.4h0M134.1 330.6h0M131.8 337.8h0M129.4 345.0h0M127.1 352.2h0M124.7 359.4h0M122.3 366.7h0M120.0 373.9h0M117.6 381.1h0M115.2 388.3h0M160.3 275.2h0M157.9 282.4h0M155.5 289.6h0M153.2 296.8h0M150.8 304.1h0M148.4 311.3h0M146.1 318.5h0M143.7 325.7h0M141.4 332.9h0M139.0 340.1h0M136.6 347.4h0M134.3 354.6h0M131.9 361.8h0M129.5 369.0h0M127.2 376.2h0M124.8 383.5h0M122.5 390.7h0M165.1 284.8h0M162.7 292.0h0M160.4 299.2h0M158.0 306.4h0M155.7 313.6h0M153.3 320.9h0M150.9 328.1h0M148.6 335.3h0M146.2 342.5h0M143.9 349.7h0M141.5 356.9h0M139.1 364.2h0M136.8 371.4h0M134.4 378.6h0M132.0 385.8h0M172.3 287.1h0M170.0 294.3h0M167.6 301.6h0M165.2 308.8h0M162.9 316.0h0M160.5 323.2h0M158.2 330.4h0M155.8 337.7h0M153.4 344.9h0M151.1 352.1h0M148.7 359.3h0M146.3 366.5h0M144.0 373.7h0M141.6 381.0h0M139.3 388.2h0M179.5 289.5h0M177.2 296.7h0M174.8 303.9h0M172.5 311.1h0M170.1 318.4h0M167.7 325.6h0M148.8 383.3h0M146.5 390.5h0M186.8 291.9h0M184.4 299.1h0M182.0 306.3h0M194.0 294.2h0M380.0 67.5h0M377.7 74.7h0M410.9 -2.4h0M408.5 4.9h0M406.2 12.1h0M403.8 19.3h0M401.4 26.5h0M399.1 33.7h0M396.7 40.9h0M394.3 48.2h0M392.0 55.4h0M389.6 62.6h0M387.3 69.8h0M384.9 77.0h0M382.5 84.3h0M418.1 0.0h0M415.7 7.2h0M413.4 14.4h0M411.0 21.7h0M408.7 28.9h0M406.3 36.1h0M403.9 43.3h0M401.6 50.5h0M399.2 57.7h0M396.8 65.0h0M394.5 72.2h0M392.1 79.4h0M389.8 86.6h0M425.3 2.4h0M423.0 9.6h0M420.6 16.8h0M418.2 24.0h0M415.9 31.2h0M413.5 38.5h0M411.1 45.7h0M408.8 52.9h0M406.4 60.1h0M404.1 67.3h0M401.7 74.5h0M399.3 81.8h0M397.0 89.0h0M434.9 -2.5h0M432.5 4.7h0M430.2 11.9h0M427.8 19.2h0M425.4 26.4h0M423.1 33.6h0M420.7 40.8h0M418.4 48.0h0M416.0 55.3h0M413.6 62.5h0M411.3 69.7h0M408.9 76.9h0M406.6 84.1h0M404.2 91.3h0M442.1 -0.1h0M439.7 7.1h0M437.4 14.3h0M435.0 21.5h0M432.7 28.7h0M430.3 36.0h0M427.9 43.2h0M425.6 50.4h0M423.2 57.6h0M420.9 64.8h0M418.5 72.0h0M416.1 79.3h0M413.8 86.5h0M411.4 93.7h0M409.0 100.9h0M449.3 2.2h0M447.0 9.5h0M444.6 16.7h0M442.2 23.9h0M439.9 31.1h0M437.5 38.3h0M435.2 45.5h0M432.8 52.8h0M430.4 60.0h0M428.1 67.2h0M425.7 74.4h0M423.3 81.6h0M421.0 88.8h0M418.6 96.1h0M416.3 103.3h0M458.9 -2.6h0M456.5 4.6h0M454.2 11.8h0M451.8 19.0h0M449.5 26.2h0M447.1 33.5h0M444.7 40.7h0M442.4 47.9h0M440.0 55.1h0M437.7 62.3h0M435.3 69.6h0M432.9 76.8h0M430.6 84.0h0M428.2 91.2h0M463.8 7.0h0M461.4 14.2h0M459.0 21.4h0M456.7 28.6h0M454.3 35.8h0M452.0 43.0h0M449.6 50.3h0M447.2 57.5h0M444.9 64.7h0M442.5 71.9h0M445.4 160.8h0M452.6 163.1h0M450.3 170.3h0M447.9 177.6h0M459.8 165.5h0M457.5 172.7h0M455.1 179.9h0M452.7 187.1h0M469.4 160.6h0M467.0 167.8h0M464.7 175.1h0M462.3 182.3h0M460.0 189.5h0M476.6 163.0h0M474.3 170.2h0M471.9 177.4h0M469.5 184.6h0M486.2 158.1h0M483.8 165.3h0M481.5 172.6h0M479.1 179.8h0M476.8 187.0h0M493.4 160.5h0M491.1 167.7h0M488.7 174.9h0M486.3 182.1h0M503.0 155.6h0M500.6 162.9h0M498.3 170.1h0M495.9 177.3h0M493.6 184.5h0M510.2 158.0h0M507.9 165.2h0M505.5 172.4h0M503.1 179.6h0M500.8 186.9h0M517.4 160.4h0M515.1 167.6h0M512.7 174.8h0M510.4 182.0h0M527.0 155.5h0M524.7 162.7h0M522.3 169.9h0M519.9 177.2h0M517.6 184.4h0M534.2 157.9h0M531.9 165.1h0M529.5 172.3h0M527.2 179.5h0M541.5 160.2h0M539.1 167.4h0M536.7 174.7h0M534.4 181.9h0M546.3 169.8h0M543.9 177.0h0M541.6 184.2h0"/>
<path stroke-width="8.8" d="M-3.3 237.7h0M4.0 240.0h0M1.6 247.2h0M-0.8 254.5h0M-3.1 261.7h0M11.2 242.4h0M8.8 249.6h0M6.5 256.8h0M4.1 264.0h0M1.7 271.3h0M20.8 237.5h0M18.4 244.8h0M16.0 252.0h0M13.7 259.2h0M11.3 266.4h0M28.0 239.9h0M25.6 247.1h0M23.3 254.3h0M20.9 261.5h0M18.5 268.8h0M35.2 242.3h0M32.8 249.5h0M30.5 256.7h0M28.1 263.9h0M25.7 271.1h0M44.8 237.4h0M42.4 244.6h0M40.0 251.8h0M37.7 259.1h0M35.3 266.3h0M52.0 239.8h0M49.6 247.0h0M47.3 254.2h0M44.9 261.4h0M42.5 268.6h0M61.6 234.9h0M59.2 242.1h0M56.8 249.3h0M54.5 256.6h0M52.1 263.8h0M49.8 271.0h0M68.8 237.3h0M66.4 244.5h0M64.1 251.7h0M61.7 258.9h0M59.3 266.1h0M47.5 302.2h0M45.2 309.4h0M42.8 316.7h0M40.4 323.9h0M38.1 331.1h0M35.7 338.3h0M33.4 345.5h0M31.0 352.7h0M28.6 360.0h0M26.3 367.2h0M23.9 374.4h0M21.6 381.6h0M76.0 239.6h0M73.6 246.8h0M71.3 254.1h0M68.9 261.3h0M66.6 268.5h0M61.8 282.9h0M59.5 290.2h0M57.1 297.4h0M54.7 304.6h0M52.4 311.8h0M50.0 319.0h0M47.7 326.2h0M45.3 333.5h0M42.9 340.7h0M40.6 347.9h0M38.2 355.1h0M35.9 362.3h0M33.5 369.5h0M31.1 376.8h0M28.8 384.0h0M26.4 391.2h0M85.6 234.8h0M83.2 242.0h0M80.9 249.2h0M78.5 256.4h0M76.1 263.6h0M73.8 270.9h0M71.4 278.1h0M69.1 285.3h0M66.7 292.5h0M64.3 299.7h0M62.0 307.0h0M59.6 314.2h0M57.2 321.4h0M54.9 328.6h0M52.5 335.8h0M50.2 343.0h0M47.8 350.3h0M45.4 357.5h0M43.1 364.7h0M40.7 371.9h0M38.3 379.1h0M36.0 386.3h0M92.8 237.1h0M90.4 244.4h0M88.1 251.6h0M85.7 258.8h0M83.4 266.0h0M81.0 273.2h0M78.6 280.4h0M76.3 287.7h0M73.9 294.9h0M71.5 302.1h0M69.2 309.3h0M66.8 316.5h0M64.5 323.7h0M62.1 331.0h0M59.7 338.2h0M57.4 345.4h0M55.0 352.6h0M52.7 359.8h0M50.3 367.1h0M47.9 374.3h0M45.6 381.5h0M43.2 388.7h0M102.4 232.3h0M100.0 239.5h0M97.7 246.7h0M95.3 253.9h0M92.9 261.2h0M90.6 268.4h0M88.2 275.6h0M85.8 282.8h0M83.5 290.0h0M81.1 297.2h0M78.8 304.5h0M76.4 311.7h0M74.0 318.9h0M71.7 326.1h0M69.3 333.3h0M67.0 340.5h0M64.6 347.8h0M62.2 355.0h0M59.9 362.2h0M57.5 369.4h0M55.1 376.6h0M52.8 383.8h0M50.4 391.1h0M109.6 234.6h0M107.2 241.9h0M104.9 249.1h0M102.5 256.3h0M100.2 263.5h0M97.8 270.7h0M95.4 277.9h0M93.1 285.2h0M90.7 292.4h0M88.3 299.6h0M86.0 306.8h0M83.6 314.0h0M81.3 321.3h0M78.9 328.5h0M76.5 335.7h0M74.2 342.9h0M71.8 350.1h0M69.4 357.3h0M67.1 364.6h0M64.7 371.8h0M62.4 379.0h0M60.0 386.2h0M116.8 237.0h0M114.5 244.2h0M112.1 251.4h0M109.7 258.7h0M107.4 265.9h0M105.0 273.1h0M102.6 280.3h0M100.3 287.5h0M97.9 294.7h0M95.6 302.0h0M93.2 309.2h0M90.8 316.4h0M88.5 323.6h0M86.1 330.8h0M83.7 338.0h0M81.4 345.3h0M79.0 352.5h0M76.7 359.7h0M74.3 366.9h0M71.9 374.1h0M69.6 381.4h0M67.2 388.6h0M121.7 246.6h0M119.3 253.8h0M116.9 261.0h0M114.6 268.2h0M112.2 275.5h0M109.9 282.7h0M107.5 289.9h0M105.1 297.1h0M102.8 304.3h0M100.4 311.5h0M98.1 318.8h0M95.7 326.0h0M93.3 333.2h0M91.0 340.4h0M88.6 347.6h0M86.2 354.8h0M83.9 362.1h0M81.5 369.3h0M79.2 376.5h0M76.8 383.7h0M74.4 390.9h0M126.5 256.2h0M124.2 263.4h0M121.8 270.6h0M119.4 277.8h0M117.1 285.0h0M114.7 292.3h0M112.4 299.5h0M110.0 306.7h0M107.6 313.9h0M105.3 321.1h0M102.9 328.3h0M91.1 364.4h0M88.7 371.6h0M86.4 378.9h0M84.0 386.1h0M133.7 258.5h0M131.4 265.7h0M129.0 273.0h0M126.7 280.2h0M124.3 287.4h0M121.9 294.6h0M119.6 301.8h0M138.6 268.1h0M136.2 275.3h0M133.9 282.5h0M145.8 270.5h0M425.8 98.4h0M423.5 105.6h0M421.1 112.9h0M466.1 -0.3h0M440.1 79.1h0M437.8 86.4h0M435.4 93.6h0M433.1 100.8h0M430.7 108.0h0M428.3 115.2h0M473.3 2.1h0M471.0 9.3h0M468.6 16.5h0M466.3 23.8h0M463.9 31.0h0M461.5 38.2h0M459.2 45.4h0M456.8 52.6h0M454.4 59.8h0M452.1 67.1h0M449.7 74.3h0M447.4 81.5h0M445.0 88.7h0M442.6 95.9h0M440.3 103.1h0M437.9 110.4h0M435.6 117.6h0M433.2 124.8h0M482.9 -2.8h0M480.6 4.5h0M478.2 11.7h0M475.8 18.9h0M473.5 26.1h0M471.1 33.3h0M468.8 40.6h0M466.4 47.8h0M464.0 55.0h0M461.7 62.2h0M459.3 69.4h0M456.9 76.6h0M454.6 83.9h0M452.2 91.1h0M449.9 98.3h0M447.5 105.5h0M445.1 112.7h0M442.8 119.9h0M440.4 127.2h0M438.0 134.4h0M490.1 -0.4h0M487.8 6.8h0M485.4 14.0h0M483.1 21.3h0M480.7 28.5h0M478.3 35.7h0M476.0 42.9h0M473.6 50.1h0M471.2 57.3h0M468.9 64.6h0M466.5 71.8h0M464.2 79.0h0M461.8 86.2h0M459.4 93.4h0M457.1 100.7h0M454.7 107.9h0M452.4 115.1h0M450.0 122.3h0M447.6 129.5h0M445.3 136.7h0M442.9 144.0h0M497.4 2.0h0M495.0 9.2h0M492.6 16.4h0M490.3 23.6h0M487.9 30.8h0M485.5 38.1h0M483.2 45.3h0M480.8 52.5h0M478.5 59.7h0M476.1 66.9h0M473.7 74.1h0M471.4 81.4h0M469.0 88.6h0M466.7 95.8h0M464.3 103.0h0M461.9 110.2h0M459.6 117.5h0M457.2 124.7h0M454.8 131.9h0M452.5 139.1h0M450.1 146.3h0M447.8 153.5h0M506.9 -2.9h0M504.6 4.3h0M502.2 11.6h0M499.9 18.8h0M497.5 26.0h0M495.1 33.2h0M492.8 40.4h0M490.4 47.6h0M488.0 54.9h0M485.7 62.1h0M483.3 69.3h0M481.0 76.5h0M478.6 83.7h0M476.2 90.9h0M473.9 98.2h0M471.5 105.4h0M469.1 112.6h0M466.8 119.8h0M464.4 127.0h0M462.1 134.2h0M459.7 141.5h0M457.3 148.7h0M455.0 155.9h0M514.2 -0.5h0M511.8 6.7h0M509.4 13.9h0M507.1 21.1h0M504.7 28.3h0M502.3 35.6h0M500.0 42.8h0M497.6 50.0h0M495.3 57.2h0M492.9 64.4h0M490.5 71.7h0M488.2 78.9h0M485.8 86.1h0M483.5 93.3h0M481.1 100.5h0M478.7 107.7h0M476.4 115.0h0M474.0 122.2h0M471.6 129.4h0M469.3 136.6h0M466.9 143.8h0M464.6 151.0h0M462.2 158.3h0M521.4 1.8h0M519.0 9.1h0M516.6 16.3h0M514.3 23.5h0M511.9 30.7h0M509.6 37.9h0M507.2 45.1h0M504.8 52.4h0M502.5 59.6h0M500.1 66.8h0M497.8 74.0h0M495.4 81.2h0M493.0 88.4h0M490.7 95.7h0M488.3 102.9h0M485.9 110.1h0M483.6 117.3h0M481.2 124.5h0M478.9 131.8h0M476.5 139.0h0M474.1 146.2h0M471.8 153.4h0M531.0 -3.0h0M528.6 4.2h0M526.2 11.4h0M523.9 18.6h0M521.5 25.9h0M519.1 33.1h0M516.8 40.3h0M514.4 47.5h0M512.1 54.7h0M509.7 61.9h0M507.3 69.2h0M505.0 76.4h0M502.6 83.6h0M500.2 90.8h0M497.9 98.0h0M488.4 126.9h0M486.1 134.1h0M483.7 141.3h0M481.4 148.5h0M479.0 155.8h0M535.8 6.6h0M533.4 13.8h0M531.1 21.0h0M528.7 28.2h0M526.4 35.4h0M524.0 42.7h0M521.6 49.9h0M519.3 57.1h0M516.9 64.3h0M514.5 71.5h0M512.2 78.7h0M498.0 122.0h0M495.7 129.3h0M493.3 136.5h0M490.9 143.7h0M488.6 150.9h0M505.2 124.4h0M502.9 131.6h0M500.5 138.8h0M498.1 146.1h0M495.8 153.3h0M514.8 119.5h0M512.5 126.8h0M510.1 134.0h0M507.7 141.2h0M505.4 148.4h0M522.0 121.9h0M519.7 129.1h0M517.3 136.3h0M514.9 143.6h0M512.6 150.8h0M529.2 124.3h0M526.9 131.5h0M524.5 138.7h0M522.2 145.9h0M519.8 153.1h0M538.8 119.4h0M536.5 126.6h0M534.1 133.9h0M531.7 141.1h0M529.4 148.3h0M546.0 121.8h0M543.7 129.0h0M541.3 136.2h0M539.0 143.4h0M536.6 150.6h0M546.2 145.8h0M543.8 153.0h0"/>
<path stroke-width="9.2" d="M-0.6 278.5h0M-3.0 285.7h0M9.0 273.6h0M6.6 280.8h0M4.2 288.1h0M1.9 295.3h0M-0.5 302.5h0M-2.9 309.7h0M16.2 276.0h0M13.8 283.2h0M11.4 290.4h0M9.1 297.6h0M6.7 304.9h0M4.4 312.1h0M2.0 319.3h0M-0.4 326.5h0M-2.7 333.7h0M23.4 278.3h0M21.0 285.6h0M18.7 292.8h0M16.3 300.0h0M13.9 307.2h0M11.6 314.4h0M9.2 321.6h0M6.9 328.9h0M4.5 336.1h0M2.1 343.3h0M-0.2 350.5h0M-2.6 357.7h0M33.0 273.5h0M30.6 280.7h0M28.2 287.9h0M25.9 295.1h0M23.5 302.4h0M21.2 309.6h0M18.8 316.8h0M16.4 324.0h0M14.1 331.2h0M11.7 338.4h0M9.3 345.7h0M7.0 352.9h0M4.6 360.1h0M2.3 367.3h0M-0.1 374.5h0M-2.5 381.7h0M40.2 275.9h0M37.8 283.1h0M35.5 290.3h0M33.1 297.5h0M30.7 304.7h0M28.4 311.9h0M26.0 319.2h0M23.6 326.4h0M21.3 333.6h0M18.9 340.8h0M16.6 348.0h0M14.2 355.2h0M11.8 362.5h0M9.5 369.7h0M7.1 376.9h0M4.8 384.1h0M2.4 391.3h0M47.4 278.2h0M45.0 285.4h0M42.7 292.6h0M40.3 299.9h0M38.0 307.1h0M35.6 314.3h0M33.2 321.5h0M30.9 328.7h0M28.5 336.0h0M26.1 343.2h0M23.8 350.4h0M21.4 357.6h0M19.1 364.8h0M16.7 372.0h0M14.3 379.3h0M12.0 386.5h0M57.0 273.4h0M54.6 280.6h0M52.3 287.8h0M49.9 295.0h0M19.2 388.8h0M64.2 275.7h0M495.5 105.2h0M493.2 112.5h0M490.8 119.7h0M538.2 -0.7h0M509.8 86.0h0M507.5 93.2h0M505.1 100.4h0M502.7 107.6h0M500.4 114.8h0M545.4 1.7h0M543.0 8.9h0M540.7 16.1h0M538.3 23.4h0M535.9 30.6h0M533.6 37.8h0M531.2 45.0h0M528.9 52.2h0M526.5 59.4h0M524.1 66.7h0M521.8 73.9h0M519.4 81.1h0M517.0 88.3h0M514.7 95.5h0M512.3 102.8h0M510.0 110.0h0M507.6 117.2h0M545.5 25.7h0M543.2 32.9h0M540.8 40.2h0M538.4 47.4h0M536.1 54.6h0M533.7 61.8h0M531.3 69.0h0M529.0 76.2h0M526.6 83.5h0M524.3 90.7h0M521.9 97.9h0M519.5 105.1h0M517.2 112.3h0M545.6 49.7h0M543.3 57.0h0M540.9 64.2h0M538.6 71.4h0M536.2 78.6h0M533.8 85.8h0M531.5 93.0h0M529.1 100.3h0M526.8 107.5h0M524.4 114.7h0M545.8 73.7h0M543.4 81.0h0M541.1 88.2h0M538.7 95.4h0M536.3 102.6h0M534.0 109.8h0M531.6 117.1h0M545.9 97.8h0M543.6 105.0h0M541.2 112.2h0"/>
</g>
<g stroke="#eca21b">
<path stroke-width="0.8" d="M13.3 199.2h0M20.6 201.5h0M30.1 196.7h0M37.4 199.0h0M6.7 292.8h0M4.3 300.1h0M1.9 307.3h0M-0.4 314.5h0M54.2 196.5h0M61.4 198.9h0M71.0 194.0h0M78.2 196.4h0M167.8 337.6h0M165.4 344.8h0M163.1 352.0h0M160.7 359.2h0M158.4 366.5h0M182.1 318.3h0M179.7 325.5h0M177.4 332.7h0M175.0 339.9h0M172.7 347.2h0M170.3 354.4h0M167.9 361.6h0M165.6 368.8h0M163.2 376.0h0M160.8 383.3h0M196.4 299.0h0M194.0 306.2h0M191.7 313.4h0M203.6 301.4h0M389.3 2.6h0M386.9 9.8h0M372.8 53.1h0M370.4 60.3h0M368.0 67.5h0M396.5 4.9h0M394.1 12.1h0M391.8 19.4h0M389.4 26.6h0M387.1 33.8h0M384.7 41.0h0M382.3 48.2h0M380.0 55.4h0M462.4 194.3h0M469.6 196.6h0M479.2 191.8h0M486.4 194.1h0M503.2 191.7h0M510.4 194.0h0M520.0 189.2h0M527.2 191.5h0"/>
<path stroke-width="1.2" d="M3.8 204.0h0M11.0 206.4h0M27.8 203.9h0M4.2 276.0h0M1.8 283.3h0M35.0 206.2h0M11.4 278.4h0M9.0 285.6h0M44.6 201.4h0M18.6 280.8h0M16.2 288.0h0M13.9 295.2h0M11.5 302.4h0M9.1 309.6h0M6.8 316.9h0M4.4 324.1h0M2.1 331.3h0M-0.3 338.5h0M51.8 203.7h0M28.2 275.9h0M25.8 283.1h0M23.5 290.4h0M21.1 297.6h0M18.7 304.8h0M16.4 312.0h0M14.0 319.2h0M11.6 326.4h0M9.3 333.7h0M6.9 340.9h0M4.6 348.1h0M2.2 355.3h0M-0.2 362.5h0M35.4 278.3h0M33.0 285.5h0M30.7 292.7h0M28.3 299.9h0M25.9 307.1h0M23.6 314.4h0M21.2 321.6h0M18.9 328.8h0M16.5 336.0h0M14.1 343.2h0M11.8 350.5h0M9.4 357.7h0M7.1 364.9h0M4.7 372.1h0M2.3 379.3h0M-0.0 386.5h0M68.6 201.2h0M42.6 280.6h0M40.2 287.9h0M37.9 295.1h0M35.5 302.3h0M33.2 309.5h0M30.8 316.7h0M28.4 323.9h0M26.1 331.2h0M19.0 352.8h0M16.6 360.0h0M14.3 367.2h0M11.9 374.5h0M9.5 381.7h0M75.8 203.6h0M52.2 275.8h0M49.8 283.0h0M47.5 290.2h0M85.4 198.8h0M59.4 278.1h0M92.6 201.1h0M162.9 328.0h0M160.6 335.2h0M158.2 342.4h0M155.9 349.7h0M153.5 356.9h0M151.1 364.1h0M148.8 371.3h0M146.4 378.5h0M177.2 308.7h0M174.9 315.9h0M172.5 323.2h0M170.2 330.4h0M156.0 373.7h0M153.6 380.9h0M189.2 296.6h0M186.8 303.9h0M184.5 311.1h0M377.6 62.7h0M375.3 69.9h0M406.1 0.1h0M403.7 7.3h0M401.4 14.5h0M399.0 21.7h0M396.6 28.9h0M394.3 36.2h0M391.9 43.4h0M389.6 50.6h0M387.2 57.8h0M384.8 65.0h0M455.2 191.9h0M498.0 110.0h0M495.6 117.3h0M472.0 189.4h0M512.3 90.7h0M509.9 98.0h0M507.5 105.2h0M505.2 112.4h0M543.1 20.9h0M540.7 28.1h0M538.4 35.4h0M536.0 42.6h0M533.6 49.8h0M531.3 57.0h0M528.9 64.2h0M526.6 71.5h0M524.2 78.7h0M521.8 85.9h0M519.5 93.1h0M517.1 100.3h0M514.7 107.5h0M512.4 114.8h0M488.8 186.9h0M543.2 44.9h0M540.9 52.2h0M538.5 59.4h0M536.1 66.6h0M533.8 73.8h0M531.4 81.0h0M529.1 88.3h0M526.7 95.5h0M524.3 102.7h0M522.0 109.9h0M496.0 189.3h0M543.4 69.0h0M541.0 76.2h0M538.6 83.4h0M536.3 90.6h0M533.9 97.8h0M531.5 105.0h0M529.2 112.3h0M505.6 184.4h0M543.5 93.0h0M541.1 100.2h0M538.8 107.4h0M536.4 114.6h0M512.8 186.8h0M529.6 184.3h0M536.8 186.7h0"/>
<path stroke-width="1.6" d="M1.4 211.2h0M18.2 208.7h0M1.7 259.3h0M-0.7 266.5h0M25.4 211.1h0M8.9 261.6h0M6.5 268.8h0M16.1 264.0h0M13.7 271.2h0M42.2 208.6h0M25.7 259.1h0M23.3 266.3h0M21.0 273.6h0M32.9 261.5h0M30.5 268.7h0M59.0 206.1h0M40.1 263.8h0M37.8 271.1h0M66.2 208.5h0M49.7 259.0h0M47.3 266.2h0M45.0 273.4h0M23.7 338.4h0M21.4 345.6h0M56.9 261.4h0M54.6 268.6h0M45.1 297.4h0M42.7 304.7h0M40.4 311.9h0M38.0 319.1h0M35.7 326.3h0M33.3 333.5h0M30.9 340.7h0M28.6 348.0h0M26.2 355.2h0M23.8 362.4h0M21.5 369.6h0M19.1 376.8h0M16.8 384.0h0M83.0 206.0h0M66.5 256.5h0M64.1 263.7h0M61.8 270.9h0M57.0 285.4h0M54.7 292.6h0M52.3 299.8h0M50.0 307.0h0M47.6 314.2h0M45.2 321.5h0M42.9 328.7h0M40.5 335.9h0M38.1 343.1h0M35.8 350.3h0M33.4 357.5h0M31.1 364.8h0M28.7 372.0h0M26.3 379.2h0M24.0 386.4h0M73.7 258.9h0M71.3 266.1h0M69.0 273.3h0M66.6 280.5h0M64.3 287.7h0M61.9 294.9h0M59.5 302.2h0M57.2 309.4h0M54.8 316.6h0M52.5 323.8h0M50.1 331.0h0M47.7 338.2h0M45.4 345.5h0M43.0 352.7h0M40.6 359.9h0M38.3 367.1h0M35.9 374.3h0M33.6 381.6h0M80.9 261.2h0M78.6 268.4h0M76.2 275.7h0M73.8 282.9h0M71.5 290.1h0M69.1 297.3h0M66.8 304.5h0M64.4 311.7h0M62.0 319.0h0M59.7 326.2h0M57.3 333.4h0M54.9 340.6h0M52.6 347.8h0M50.2 355.0h0M47.9 362.3h0M45.5 369.5h0M43.1 376.7h0M40.8 383.9h0M90.5 256.4h0M88.1 263.6h0M85.8 270.8h0M83.4 278.0h0M81.1 285.2h0M78.7 292.4h0M76.3 299.7h0M48.0 386.3h0M97.7 258.7h0M95.4 265.9h0M93.0 273.2h0M90.6 280.4h0M107.3 253.9h0M104.9 261.1h0M102.6 268.3h0M114.5 256.2h0M124.1 251.4h0M158.1 318.4h0M155.7 325.6h0M153.4 332.9h0M151.0 340.1h0M148.6 347.3h0M146.3 354.5h0M143.9 361.7h0M141.6 369.0h0M139.2 376.2h0M136.8 383.4h0M170.0 306.4h0M167.7 313.6h0M165.3 320.8h0M144.0 385.7h0M182.0 294.3h0M179.6 301.5h0M382.5 72.2h0M380.1 79.5h0M413.3 2.4h0M410.9 9.7h0M408.6 16.9h0M406.2 24.1h0M403.9 31.3h0M401.5 38.5h0M399.1 45.7h0M396.8 53.0h0M394.4 60.2h0M392.1 67.4h0M389.7 74.6h0M413.4 26.4h0M411.1 33.7h0M408.7 40.9h0M406.4 48.1h0M445.2 124.7h0M442.8 132.0h0M457.1 112.7h0M454.8 119.9h0M452.4 127.1h0M450.1 134.3h0M469.1 100.6h0M466.7 107.8h0M464.4 115.0h0M462.0 122.2h0M459.6 129.5h0M457.3 136.7h0M509.4 1.9h0M507.0 9.1h0M485.7 74.1h0M483.4 81.3h0M481.0 88.5h0M478.7 95.7h0M476.3 102.9h0M473.9 110.2h0M471.6 117.4h0M469.2 124.6h0M466.9 131.8h0M516.6 4.3h0M514.2 11.5h0M511.9 18.7h0M509.5 25.9h0M507.1 33.1h0M504.8 40.4h0M502.4 47.6h0M500.0 54.8h0M497.7 62.0h0M495.3 69.2h0M493.0 76.4h0M490.6 83.7h0M488.2 90.9h0M485.9 98.1h0M483.5 105.3h0M481.2 112.5h0M478.8 119.7h0M476.4 127.0h0M474.1 134.2h0M457.5 184.7h0M526.2 -0.6h0M523.8 6.6h0M521.4 13.8h0M519.1 21.1h0M516.7 28.3h0M514.4 35.5h0M512.0 42.7h0M509.6 49.9h0M507.3 57.2h0M504.9 64.4h0M502.5 71.6h0M500.2 78.8h0M497.8 86.0h0M495.5 93.2h0M493.1 100.5h0M490.7 107.7h0M488.4 114.9h0M486.0 122.1h0M483.6 129.3h0M464.8 187.1h0M533.4 1.8h0M531.0 9.0h0M528.7 16.2h0M526.3 23.4h0M523.9 30.6h0M521.6 37.9h0M519.2 45.1h0M516.8 52.3h0M514.5 59.5h0M512.1 66.7h0M509.8 73.9h0M507.4 81.2h0M505.0 88.4h0M502.7 95.6h0M500.3 102.8h0M493.2 124.5h0M490.9 131.7h0M474.3 182.2h0M540.6 4.1h0M538.2 11.4h0M535.9 18.6h0M533.5 25.8h0M531.1 33.0h0M528.8 40.2h0M526.4 47.4h0M524.1 54.7h0M521.7 61.9h0M519.3 69.1h0M517.0 76.3h0M514.6 83.5h0M502.8 119.6h0M500.4 126.8h0M498.1 134.0h0M481.6 184.6h0M510.0 122.0h0M507.7 129.2h0M519.6 117.1h0M517.2 124.3h0M514.9 131.6h0M498.3 182.1h0M526.8 119.5h0M524.5 126.7h0M534.0 121.8h0M531.7 129.1h0M515.1 179.6h0M543.6 117.0h0M541.3 124.2h0M538.9 131.4h0M522.4 181.9h0M539.2 179.5h0"/>
<path stroke-width="2.0" d="M-1.0 218.4h0M8.6 213.6h0M6.3 220.8h0M3.9 228.0h0M1.5 235.2h0M-0.8 242.5h0M15.8 215.9h0M13.5 223.2h0M11.1 230.4h0M8.8 237.6h0M6.4 244.8h0M4.0 252.0h0M23.1 218.3h0M20.7 225.5h0M18.3 232.7h0M16.0 240.0h0M13.6 247.2h0M11.2 254.4h0M32.6 213.5h0M30.3 220.7h0M27.9 227.9h0M25.5 235.1h0M23.2 242.3h0M20.8 249.5h0M18.5 256.8h0M39.9 215.8h0M37.5 223.0h0M35.1 230.3h0M32.8 237.5h0M30.4 244.7h0M28.0 251.9h0M49.4 211.0h0M47.1 218.2h0M44.7 225.4h0M42.3 232.6h0M40.0 239.8h0M37.6 247.0h0M35.3 254.3h0M56.6 213.3h0M54.3 220.5h0M51.9 227.8h0M49.6 235.0h0M47.2 242.2h0M44.8 249.4h0M42.5 256.6h0M63.9 215.7h0M61.5 222.9h0M59.1 230.1h0M56.8 237.3h0M54.4 244.6h0M52.1 251.8h0M73.4 210.8h0M71.1 218.0h0M68.7 225.3h0M66.4 232.5h0M64.0 239.7h0M61.6 246.9h0M59.3 254.1h0M80.7 213.2h0M78.3 220.4h0M75.9 227.6h0M73.6 234.8h0M71.2 242.1h0M68.9 249.3h0M90.2 208.3h0M87.9 215.6h0M85.5 222.8h0M83.2 230.0h0M80.8 237.2h0M78.4 244.4h0M76.1 251.6h0M97.5 210.7h0M95.1 217.9h0M92.7 225.1h0M90.4 232.3h0M88.0 239.6h0M85.6 246.8h0M83.3 254.0h0M102.3 220.3h0M100.0 227.5h0M97.6 234.7h0M95.2 241.9h0M92.9 249.1h0M74.0 306.9h0M71.6 314.1h0M69.2 321.3h0M66.9 328.5h0M64.5 335.8h0M62.2 343.0h0M59.8 350.2h0M57.4 357.4h0M55.1 364.6h0M52.7 371.8h0M50.4 379.1h0M107.2 229.9h0M104.8 237.1h0M102.4 244.3h0M100.1 251.5h0M88.3 287.6h0M85.9 294.8h0M83.6 302.0h0M81.2 309.2h0M78.8 316.5h0M76.5 323.7h0M74.1 330.9h0M71.7 338.1h0M69.4 345.3h0M67.0 352.6h0M64.7 359.8h0M62.3 367.0h0M59.9 374.2h0M57.6 381.4h0M112.0 239.4h0M109.7 246.7h0M100.2 275.5h0M97.9 282.7h0M95.5 290.0h0M93.1 297.2h0M90.8 304.4h0M88.4 311.6h0M86.0 318.8h0M83.7 326.0h0M81.3 333.3h0M79.0 340.5h0M76.6 347.7h0M74.2 354.9h0M71.9 362.1h0M69.5 369.3h0M67.2 376.6h0M64.8 383.8h0M116.9 249.0h0M112.2 263.4h0M109.8 270.7h0M107.4 277.9h0M105.1 285.1h0M102.7 292.3h0M100.3 299.5h0M98.0 306.8h0M95.6 314.0h0M93.3 321.2h0M90.9 328.4h0M88.5 335.6h0M86.2 342.8h0M83.8 350.1h0M81.5 357.3h0M79.1 364.5h0M76.7 371.7h0M74.4 378.9h0M72.0 386.1h0M121.7 258.6h0M119.4 265.8h0M117.0 273.0h0M114.7 280.2h0M112.3 287.5h0M109.9 294.7h0M107.6 301.9h0M105.2 309.1h0M102.8 316.3h0M100.5 323.5h0M98.1 330.8h0M95.8 338.0h0M93.4 345.2h0M91.0 352.4h0M88.7 359.6h0M86.3 366.9h0M83.9 374.1h0M81.6 381.3h0M129.0 261.0h0M126.6 268.2h0M124.2 275.4h0M121.9 282.6h0M119.5 289.8h0M117.1 297.0h0M114.8 304.3h0M112.4 311.5h0M110.1 318.7h0M107.7 325.9h0M105.3 333.1h0M103.0 340.3h0M100.6 347.6h0M98.3 354.8h0M95.9 362.0h0M93.5 369.2h0M91.2 376.4h0M88.8 383.6h0M136.2 263.3h0M133.8 270.5h0M131.4 277.8h0M129.1 285.0h0M126.7 292.2h0M124.4 299.4h0M122.0 306.6h0M119.6 313.8h0M117.3 321.1h0M114.9 328.3h0M112.6 335.5h0M110.2 342.7h0M107.8 349.9h0M105.5 357.1h0M103.1 364.4h0M100.7 371.6h0M98.4 378.8h0M96.0 386.0h0M141.0 272.9h0M138.7 280.1h0M136.3 287.3h0M133.9 294.5h0M131.6 301.8h0M129.2 309.0h0M126.9 316.2h0M124.5 323.4h0M122.1 330.6h0M119.8 337.9h0M117.4 345.1h0M115.0 352.3h0M112.7 359.5h0M110.3 366.7h0M108.0 373.9h0M105.6 381.2h0M148.2 275.3h0M145.9 282.5h0M143.5 289.7h0M141.2 296.9h0M138.8 304.1h0M136.4 311.3h0M134.1 318.6h0M131.7 325.8h0M129.4 333.0h0M127.0 340.2h0M124.6 347.4h0M122.3 354.6h0M119.9 361.9h0M117.5 369.1h0M115.2 376.3h0M112.8 383.5h0M155.5 277.6h0M153.1 284.8h0M150.7 292.1h0M148.4 299.3h0M146.0 306.5h0M143.7 313.7h0M141.3 320.9h0M138.9 328.1h0M136.6 335.4h0M134.2 342.6h0M131.8 349.8h0M129.5 357.0h0M127.1 364.2h0M124.8 371.4h0M122.4 378.7h0M120.0 385.9h0M162.7 280.0h0M160.3 287.2h0M158.0 294.4h0M155.6 301.6h0M153.2 308.9h0M150.9 316.1h0M148.5 323.3h0M146.1 330.5h0M143.8 337.7h0M141.4 344.9h0M139.1 352.2h0M136.7 359.4h0M134.3 366.6h0M132.0 373.8h0M129.6 381.0h0M167.5 289.6h0M165.2 296.8h0M162.8 304.0h0M160.4 311.2h0M174.8 291.9h0M172.4 299.1h0M387.3 81.8h0M420.5 4.8h0M418.2 12.0h0M415.8 19.2h0M404.0 55.3h0M401.6 62.5h0M399.3 69.8h0M396.9 77.0h0M394.5 84.2h0M430.1 -0.1h0M427.7 7.2h0M425.4 14.4h0M423.0 21.6h0M420.7 28.8h0M418.3 36.0h0M415.9 43.2h0M413.6 50.5h0M411.2 57.7h0M408.8 64.9h0M406.5 72.1h0M404.1 79.3h0M401.8 86.5h0M437.3 2.3h0M435.0 9.5h0M432.6 16.7h0M430.2 24.0h0M427.9 31.2h0M425.5 38.4h0M423.2 45.6h0M420.8 52.8h0M418.4 60.0h0M416.1 67.3h0M413.7 74.5h0M411.3 81.7h0M409.0 88.9h0M406.6 96.1h0M444.5 4.7h0M442.2 11.9h0M439.8 19.1h0M437.5 26.3h0M435.1 33.5h0M432.7 40.8h0M430.4 48.0h0M428.0 55.2h0M425.6 62.4h0M423.3 69.6h0M420.9 76.8h0M418.6 84.1h0M416.2 91.3h0M413.8 98.5h0M454.1 -0.2h0M451.8 7.0h0M449.4 14.2h0M447.0 21.5h0M444.7 28.7h0M442.3 35.9h0M439.9 43.1h0M437.6 50.3h0M435.2 57.5h0M432.9 64.8h0M430.5 72.0h0M428.1 79.2h0M425.8 86.4h0M423.4 93.6h0M421.1 100.9h0M418.7 108.1h0M461.3 2.2h0M459.0 9.4h0M456.6 16.6h0M454.3 23.8h0M451.9 31.0h0M449.5 38.3h0M447.2 45.5h0M444.8 52.7h0M442.4 59.9h0M440.1 67.1h0M437.7 74.3h0M435.4 81.6h0M433.0 88.8h0M430.6 96.0h0M428.3 103.2h0M425.9 110.4h0M468.6 4.5h0M466.2 11.7h0M463.8 19.0h0M461.5 26.2h0M459.1 33.4h0M456.7 40.6h0M454.4 47.8h0M452.0 55.1h0M449.7 62.3h0M447.3 69.5h0M444.9 76.7h0M442.6 83.9h0M440.2 91.1h0M437.8 98.4h0M435.5 105.6h0M433.1 112.8h0M430.8 120.0h0M478.1 -0.3h0M475.8 6.9h0M473.4 14.1h0M471.0 21.3h0M468.7 28.5h0M466.3 35.8h0M464.0 43.0h0M461.6 50.2h0M459.2 57.4h0M456.9 64.6h0M454.5 71.8h0M452.2 79.1h0M449.8 86.3h0M447.4 93.5h0M445.1 100.7h0M442.7 107.9h0M440.3 115.2h0M438.0 122.4h0M435.6 129.6h0M485.3 2.0h0M483.0 9.3h0M480.6 16.5h0M478.3 23.7h0M475.9 30.9h0M473.5 38.1h0M471.2 45.3h0M468.8 52.6h0M466.5 59.8h0M464.1 67.0h0M461.7 74.2h0M459.4 81.4h0M457.0 88.6h0M454.6 95.9h0M452.3 103.1h0M449.9 110.3h0M447.6 117.5h0M492.6 4.4h0M490.2 11.6h0M487.8 18.8h0M485.5 26.1h0M483.1 33.3h0M480.8 40.5h0M478.4 47.7h0M476.0 54.9h0M473.7 62.1h0M471.3 69.4h0M468.9 76.6h0M466.6 83.8h0M464.2 91.0h0M461.9 98.2h0M459.5 105.4h0M447.7 141.5h0M445.3 148.7h0M502.1 -0.5h0M499.8 6.8h0M497.4 14.0h0M495.1 21.2h0M492.7 28.4h0M490.3 35.6h0M488.0 42.8h0M485.6 50.1h0M483.3 57.3h0M480.9 64.5h0M478.5 71.7h0M476.2 78.9h0M473.8 86.2h0M471.4 93.4h0M454.9 143.9h0M452.5 151.1h0M450.2 158.3h0M504.6 16.3h0M502.3 23.6h0M499.9 30.8h0M497.6 38.0h0M495.2 45.2h0M492.8 52.4h0M490.5 59.6h0M488.1 66.9h0M464.5 139.0h0M462.1 146.3h0M459.8 153.5h0M457.4 160.7h0M455.0 167.9h0M452.7 175.1h0M450.3 182.3h0M471.7 141.4h0M469.3 148.6h0M467.0 155.8h0M464.6 163.1h0M462.3 170.3h0M459.9 177.5h0M481.3 136.5h0M478.9 143.8h0M476.6 151.0h0M474.2 158.2h0M471.8 165.4h0M469.5 172.6h0M467.1 179.8h0M488.5 138.9h0M486.1 146.1h0M483.8 153.3h0M481.4 160.6h0M479.1 167.8h0M476.7 175.0h0M495.7 141.3h0M493.4 148.5h0M491.0 155.7h0M488.6 162.9h0M486.3 170.1h0M483.9 177.4h0M505.3 136.4h0M502.9 143.6h0M500.6 150.8h0M498.2 158.1h0M495.9 165.3h0M493.5 172.5h0M491.1 179.7h0M512.5 138.8h0M510.2 146.0h0M507.8 153.2h0M505.4 160.4h0M503.1 167.6h0M500.7 174.9h0M522.1 133.9h0M519.7 141.1h0M517.4 148.4h0M515.0 155.6h0M512.6 162.8h0M510.3 170.0h0M507.9 177.2h0M529.3 136.3h0M527.0 143.5h0M524.6 150.7h0M522.2 157.9h0M519.9 165.1h0M517.5 172.4h0M536.5 138.6h0M534.2 145.9h0M531.8 153.1h0M529.4 160.3h0M527.1 167.5h0M524.7 174.7h0M543.7 141.0h0M541.4 148.2h0M539.0 155.4h0M536.7 162.7h0M534.3 169.9h0M531.9 177.1h0M543.9 165.0h0M541.5 172.2h0"/>
</g>
 </g>
 <path d="M220.1 301.72A180.5 127.5 0 1 0 159.4 279.43L156 336.4Z" fill="#fff" stroke="#333" stroke-width="1" stroke-linejoin="miter"/>
</svg>
<div class="t" style="left:403px;top:218.2px;font-size:22px;color:#111;transform:scaleX(1.031);transform-origin:0 0">Mitä <b>merkityksiä</b></div>
<div class="t" style="left:347px;top:245.2px;font-size:22px;color:#111;transform:scaleX(1.084);transform-origin:0 0">sinä annat eläköitymiselle?</div>
<div class="t" style="left:4px;top:436px;font-size:9.3px;color:#f2f2f2;-webkit-text-stroke:0.15px currentColor">Anna Pylkkänen</div>

<!-- bottom strip -->
<div class="a" style="left:0;top:465px;width:281px;height:62px;background:#1c1c1c"></div>
<div class="a" style="left:281px;top:465px;width:144px;height:62px;background:#3b3b3b"></div>
<div class="a" style="left:425px;top:465px;width:144px;height:62px;background:#393939"></div>
<div class="a" style="left:569px;top:465px;width:144px;height:62px;background:#343434"></div>
<svg class="a" style="left:713px;top:465px" width="144" height="62" viewBox="713 465 144 62">
 <defs>
  <linearGradient id="wall" x1="0" x2="1" y1="0" y2="0"><stop offset="0" stop-color="#bdbab9"/><stop offset="0.06" stop-color="#c7c4c3"/><stop offset="0.7" stop-color="#c9c6c5"/><stop offset="1" stop-color="#cbc8c7"/></linearGradient>
  <filter id="bl" x="-20%" y="-20%" width="140%" height="140%"><feGaussianBlur stdDeviation="0.9"/></filter>
  <filter id="bl2" x="-20%" y="-20%" width="140%" height="140%"><feGaussianBlur stdDeviation="1.6"/></filter>
 </defs>
 <rect x="713" y="465" width="144" height="62" fill="url(#wall)"/>
 <g filter="url(#bl)">
  <rect x="745.4" y="460" width="64.3" height="48" fill="#dad7d1" stroke="#b39868" stroke-width="1.4"/>
  <rect x="753.6" y="469" width="49" height="31.3" fill="#d3d0cb" stroke="#bdb8b0" stroke-width="0.8"/>
 </g>
 <g filter="url(#bl2)" fill="none" stroke="#8d9cb3" stroke-width="1.6" opacity="0.9">
  <path d="M759 488Q756 478 762 473Q772 469 785 471"/>
  <path d="M764 484Q768 476 772 482Q770 490 766 495"/>
  <path d="M770 478Q778 474 784 478"/>
 </g>
 <g filter="url(#bl)">
  <path d="M785.2 474.2Q798 474 803 485Q806 493 805 501Q806 511 803 515.5Q797 519 793 514L778 514Q773 519 771 517.5Q765 512 766.3 504Q765 492 769 483Q774 474.5 785.2 474.2Z" fill="#4b2f27"/>
  <path d="M785.5 479.5Q797.5 479.5 799 493Q799.5 503 797 512Q793 521 785.5 521Q778 521 774 512Q771.5 503 772 493Q773.5 479.5 785.5 479.5Z" fill="#c8917d"/>
  <rect x="777" y="514" width="17" height="14" fill="#c48c79"/>
  <path d="M757 528Q762 523 773 521L779 527Z M814 528Q809 523 799 521L792 527Z" fill="#1e4a3c"/>
  <path d="M773 521.5L776.5 527M799.5 521.5L795.5 527" stroke="#e6dede" stroke-width="1.5"/>
  <g fill="none" stroke="#6e5048" stroke-width="1">
   <ellipse cx="777.4" cy="493.8" rx="5" ry="3.8"/>
   <ellipse cx="789.7" cy="493.8" rx="5" ry="3.8"/>
  </g>
  <ellipse cx="778.3" cy="492.8" rx="2" ry="1.3" fill="#bfaed6"/>
  <ellipse cx="790.4" cy="492.8" rx="2" ry="1.3" fill="#bfaed6"/>
  <ellipse cx="783.3" cy="506.6" rx="4.8" ry="1.7" fill="#e9d9d2"/>
 </g>
</svg>
<div class="a" style="left:857px;top:465px;width:143px;height:62px;background:#474644"></div>

<div class="av" style="left:27.5px;top:484.7px;width:36px;height:36px;background:#e2def0;color:#4b4474"><span style="top:10px">AA</span></div>
<div class="av" style="left:94.9px;top:484.7px;width:36px;height:36px;background:#d5e3e9;color:#2d505d"><span style="top:10px">OR</span></div>
<div class="av" style="left:162.2px;top:484.7px;width:36px;height:36px;background:#f3d5e0;color:#7b2347"><span style="top:10px">SJ</span></div>
<div class="av" style="left:229.2px;top:484.7px;width:36px;height:36px;background:#d0e1d5;color:#2a5b3c"><span style="top:10px">MS</span></div>
<div class="av" style="left:335.1px;top:484.7px;width:36px;height:36px;background:#d1e1d7;color:#1f5b37;-webkit-text-stroke:0.2px currentColor"><span style="top:10px">K</span></div>
<div class="av" style="left:479px;top:484.7px;width:36px;height:36px;background:#d1e1d7;color:#1f5b37;-webkit-text-stroke:0.2px currentColor"><span style="top:10px">JT</span></div>
<div class="av" style="left:623.3px;top:484.7px;width:36px;height:36px;background:#ddf0f3;color:#2b7070;-webkit-text-stroke:0.2px currentColor"><span style="top:10px">HK</span></div>
<div class="av" style="left:906.9px;top:480px;width:45px;height:45px;background:#e8dedb;color:#5b3a2d;-webkit-text-stroke:0.15px currentColor;font-size:18px"><span style="top:13px">TV</span></div>

<div class="a" style="left:391px;top:526px;width:2px;height:1px;background:#aaa"></div>
<div class="a" style="left:396px;top:526px;width:2px;height:1px;background:#aaa"></div>
<div class="a" style="left:550px;top:526px;width:2px;height:1px;background:#999"></div>
<div class="a" style="left:554px;top:526px;width:2px;height:1px;background:#999"></div>
<div class="a" style="left:627px;top:526px;width:1px;height:1px;background:#888"></div>
<div class="a" style="left:650px;top:526px;width:2px;height:1px;background:#999"></div>
<div class="a" style="left:654px;top:526px;width:2px;height:1px;background:#999"></div>
<!-- left border -->
<div class="a" style="left:0;top:0;width:1px;height:527px;background:#e6e6e6"></div>
<div class="a" style="left:1px;top:0;width:1px;height:527px;background:#8c8c8c"></div>
<div class="a" style="left:2px;top:0;width:1px;height:527px;background:rgba(0,0,0,0.18)"></div>
</body></html>
